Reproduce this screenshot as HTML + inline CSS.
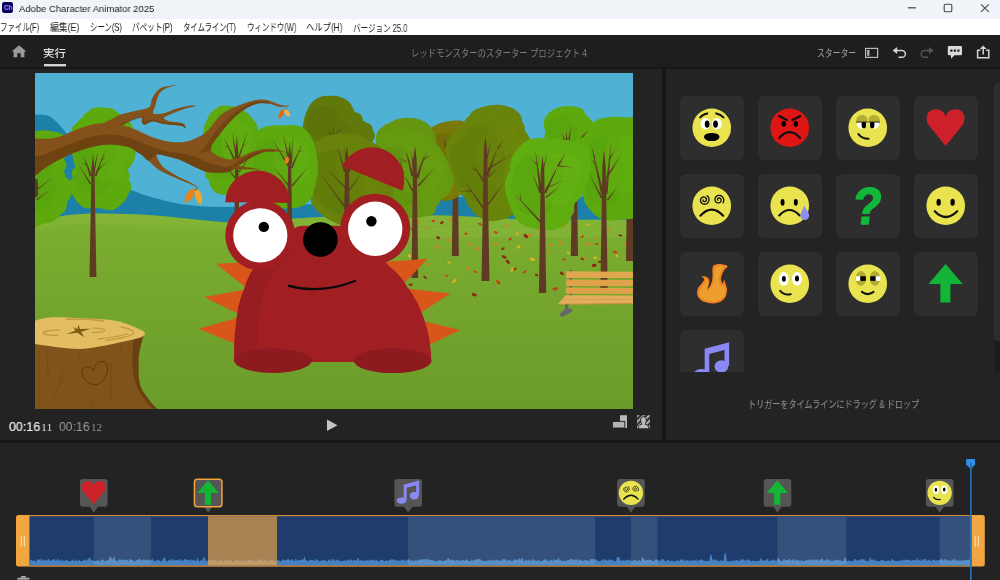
<!DOCTYPE html>
<html lang="ja">
<head>
<meta charset="utf-8">
<title>Adobe Character Animator 2025</title>
<style>
*{box-sizing:border-box;margin:0;padding:0}
html,body{width:1000px;height:580px;overflow:hidden;background:#232323}
body{position:relative;font-family:"Liberation Sans","Noto Sans CJK JP",sans-serif;color:#ccc}
.abs{position:absolute}
.t{position:absolute;white-space:nowrap;transform-origin:0 50%;line-height:1;will-change:transform}
#titlebar{left:0;top:0;width:1000px;height:19px;background:#f0f3f8}
#menubar{left:0;top:19px;width:1000px;height:16px;background:#fff}
#header{left:0;top:35px;width:1000px;height:32px;background:#1e1e1e}
#hdiv1{left:0;top:67px;width:1000px;height:2px;background:#171717}
#scenepanel{left:0;top:69px;width:662px;height:371px;background:#232323}
#vdiv{left:662px;top:69px;width:4px;height:371px;background:#171717}
#rightpanel{left:666px;top:69px;width:334px;height:371px;background:#232323;overflow:hidden}
#hdiv2{left:0;top:440px;width:1000px;height:3px;background:#171717}
#timeline{left:0;top:443px;width:1000px;height:137px;background:#232323;overflow:hidden}
.card{position:absolute;width:64px;height:64px;border-radius:6px;background:#2e2e2e}
.card svg{position:absolute;left:0;top:0}
</style>
</head>
<body>
<svg width="0" height="0" style="position:absolute">
<defs>
<!-- all symbols are drawn in a 64x64 box, centre 32,32 -->
<symbol id="e-fear" viewBox="0 0 64 64"><circle cx="31.900" cy="31.900" r="19.400" fill="#e8e34f"/>
<path d="M20.300 21.500 Q23 18.200 27.400 17.500M36.400 17.500 Q40.800 18.200 43.700 21.500" fill="none" stroke="#111" stroke-width="2.100" stroke-linecap="round"/>
<ellipse cx="25.700" cy="27.900" rx="5" ry="5.800" fill="#fff"/><ellipse cx="37" cy="27.900" rx="5" ry="5.800" fill="#fff"/>
<ellipse cx="27.300" cy="28.300" rx="2.400" ry="3.600" fill="#000"/><ellipse cx="35.700" cy="28.300" rx="2.400" ry="3.600" fill="#000"/>
<ellipse cx="31.900" cy="41.200" rx="7.800" ry="4.100" fill="#000"/></symbol>
<symbol id="e-angry" viewBox="0 0 64 64"><circle cx="31.900" cy="31.900" r="19.400" fill="#de1515"/>
<path d="M21.200 20.200 L29 24.200M42.400 20.200 L34.700 24.200" fill="none" stroke="#111" stroke-width="2.300" stroke-linecap="round"/>
<ellipse cx="25.900" cy="28" rx="2.300" ry="3" fill="#000"/><ellipse cx="38" cy="28" rx="2.300" ry="3" fill="#000"/>
<path d="M21.400 42.200 Q31.800 30.500 42.300 42.200" fill="none" stroke="#111" stroke-width="2.300" stroke-linecap="round"/></symbol>
<symbol id="e-smirk" viewBox="0 0 64 64"><circle cx="31.900" cy="31.900" r="19.400" fill="#e8e34f"/>
<ellipse cx="26.100" cy="28.300" rx="4.900" ry="4.900" fill="#fff"/><ellipse cx="38.400" cy="28.300" rx="4.900" ry="4.900" fill="#fff"/>
<ellipse cx="28" cy="28.800" rx="2.300" ry="3.700" fill="#000"/><ellipse cx="36.400" cy="28.800" rx="2.300" ry="3.700" fill="#000"/>
<path d="M20.400 26.200 L31.800 26.200 L31.800 24 A5.700 4.800 0 0 0 20.400 24Z" fill="#b3ad32"/><path d="M32.700 26.200 L44.100 26.200 L44.100 24 A5.700 4.800 0 0 0 32.700 24Z" fill="#b3ad32"/>
<path d="M20.400 26.200 L31.800 26.200M32.700 26.200 L44.100 26.200" stroke="#111" stroke-width=".9" fill="none"/>
<path d="M22.500 38.200 Q26.300 43 32.800 42.900" fill="none" stroke="#111" stroke-width="2" stroke-linecap="round"/></symbol>
<symbol id="e-heart" viewBox="0 0 64 64"><path d="M31.800 50.200 L15 29.500 C11.200 24.500 11.800 13.200 21.800 13.200 C27 13.200 30.600 16.300 31.800 20.400 C33 16.300 36.600 13.200 41.800 13.200 C51.800 13.200 52.400 24.500 48.600 29.500Z" fill="#cd2129"/></symbol>
<symbol id="e-dizzy" viewBox="0 0 64 64"><circle cx="31.900" cy="31.900" r="19.400" fill="#e8e34f"/>
<g fill="none" stroke="#111" stroke-width="1.350" stroke-linecap="round">
<path d="M23.20 26.10L23.14 26.28L23.12 26.49L23.14 26.70L23.21 26.92L23.32 27.13L23.47 27.33L23.67 27.50L23.91 27.65L24.17 27.74L24.47 27.80L24.78 27.79L25.10 27.73L25.41 27.61L25.70 27.42L25.97 27.18L26.20 26.89L26.37 26.55L26.49 26.17L26.54 25.77L26.51 25.35L26.41 24.93L26.24 24.52L25.98 24.14L25.66 23.80L25.27 23.52L24.82 23.31L24.34 23.17L23.82 23.12L23.29 23.16L22.77 23.29L22.27 23.52L21.80 23.85L21.39 24.25L21.05 24.74L20.79 25.28L20.63 25.88L20.57 26.50L20.62 27.14L20.79 27.77L21.07 28.37L21.46 28.93L21.95 29.42L22.52 29.82L23.17 30.12L23.87 30.31L24.60 30.38L25.35 30.31L26.09 30.12L26.79 29.79L27.44 29.34L28.01 28.78L28.48 28.11L28.83 27.37L29.05 26.56L29.13 25.71L29.06 24.85L28.83 24.01L28.46 23.20L27.95 22.46L27.32 21.81"/>
<path d="M37.95 26.21L37.84 26.05L37.76 25.86L37.71 25.65L37.70 25.43L37.74 25.19L37.83 24.95L37.96 24.73L38.14 24.52L38.37 24.34L38.63 24.20L38.93 24.11L39.25 24.07L39.58 24.09L39.92 24.18L40.25 24.32L40.55 24.53L40.83 24.80L41.05 25.12L41.23 25.49L41.33 25.90L41.37 26.33L41.32 26.77L41.20 27.21L41.00 27.63L40.71 28.02L40.36 28.36L39.94 28.65L39.46 28.85L38.95 28.98L38.41 29.01L37.86 28.95L37.31 28.79L36.80 28.53L36.32 28.17L35.91 27.73L35.57 27.22L35.32 26.64L35.18 26.02L35.14 25.37L35.22 24.71L35.42 24.06L35.73 23.44L36.15 22.88L36.67 22.39L37.28 22.00L37.96 21.71L38.69 21.54L39.46 21.50L40.23 21.59L40.98 21.82L41.69 22.18L42.35 22.66L42.91 23.27L43.37 23.97L43.71 24.75L43.90 25.59L43.95 26.46L43.85 27.34L43.60 28.20L43.19 29.02"/></g>
<path d="M20.500 41.900 Q31.800 29.600 43.400 41.900" fill="none" stroke="#111" stroke-width="2.200" stroke-linecap="round"/></symbol>
<symbol id="e-sad" viewBox="0 0 64 64"><circle cx="31.900" cy="31.900" r="19.400" fill="#e8e34f"/>
<ellipse cx="24.700" cy="28.400" rx="2" ry="3.400" fill="#000"/><ellipse cx="38" cy="28.400" rx="2" ry="3.400" fill="#000"/>
<path d="M21.400 41.600 Q31.600 30.800 41.800 41.600" fill="none" stroke="#111" stroke-width="2.200" stroke-linecap="round"/>
<path d="M46.400 31.500 C48 35.500 51.400 38.500 51.400 41.800 A4.400 4.400 0 0 1 42.600 41.800 C42.600 38.500 45.500 35.500 46.400 31.500Z" fill="#8d8df2"/></symbol>
<symbol id="e-q" viewBox="0 0 64 64"><text x="32" y="50.700" text-anchor="middle" font-family="'Liberation Sans',sans-serif" font-weight="bold" font-size="52" fill="#12b83a" stroke="#12b83a" stroke-width="1.600" stroke-linejoin="round" transform="translate(32 32) skewX(-6) scale(.92 1) translate(-32 -32)">?</text></symbol>
<symbol id="e-smile" viewBox="0 0 64 64"><circle cx="31.900" cy="31.900" r="19.400" fill="#e8e34f"/>
<ellipse cx="24.800" cy="28.400" rx="2.200" ry="3.600" fill="#000"/><ellipse cx="38.800" cy="28.400" rx="2.200" ry="3.600" fill="#000"/>
<path d="M20.900 37.400 Q31.800 49 43.400 37.400" fill="none" stroke="#111" stroke-width="2.300" stroke-linecap="round"/></symbol>
<symbol id="e-fire" viewBox="0 0 64 64">
<path d="M33.5 13.9C34.2 13.1 36.1 12.4 37.4 12.2C38.7 12.1 41.4 12.3 42.9 12.6C44.4 12.8 47.6 13.5 47.9 14.2C48.1 15.0 45.4 16.7 44.5 18.0C43.7 19.2 42.5 21.9 42.0 23.3C41.5 24.7 41.1 26.7 41.2 27.9C41.4 29.1 42.5 31.7 43.0 31.8C43.4 31.8 44.0 27.9 44.4 28.1C44.9 28.3 45.8 31.7 46.2 33.2C46.6 34.7 47.4 37.0 47.3 38.7C47.2 40.4 46.5 43.8 45.6 45.3C44.8 46.9 42.9 48.9 41.2 49.8C39.5 50.7 35.8 51.7 33.5 51.7C31.2 51.8 26.7 51.0 24.7 50.3C22.7 49.6 20.2 47.6 19.2 46.4C18.1 45.3 17.3 43.4 17.2 42.0C17.0 40.6 17.5 37.9 18.1 36.5C18.6 35.1 20.5 33.3 21.4 32.1C22.2 30.9 24.0 29.1 24.2 28.2C24.5 27.3 23.6 26.3 23.2 25.7C22.8 25.1 21.0 24.3 21.4 24.2C21.7 24.0 24.5 24.3 25.6 24.6C26.6 24.9 28.1 25.8 28.7 26.6C29.2 27.3 29.6 28.9 29.6 29.9C29.6 30.9 28.9 32.7 28.7 33.8C28.4 34.8 27.3 37.4 27.5 37.4C27.8 37.4 30.0 34.8 30.6 33.4C31.3 32.1 32.1 29.3 32.4 27.7C32.7 26.1 32.7 23.6 32.7 22.2C32.7 20.8 32.4 18.9 32.5 17.8C32.6 16.6 32.8 14.7 33.5 13.9Z" fill="#f4811f"/>
<path d="M35.3 15.8C35.9 14.7 37.8 14.3 39.0 14.2C40.2 14.1 43.4 14.1 43.7 14.9C43.9 15.7 41.6 18.6 41.0 20.0C40.4 21.3 39.7 23.3 39.5 24.6C39.2 25.9 38.8 27.8 39.0 29.0C39.2 30.2 40.2 32.4 40.8 33.2C41.4 34.0 42.7 34.6 43.2 34.5C43.7 34.5 43.9 32.2 44.2 32.7C44.5 33.1 45.2 36.0 45.2 37.6C45.2 39.2 45.2 42.6 44.5 44.0C43.9 45.5 41.9 47.2 40.3 48.0C38.8 48.8 35.5 49.7 33.5 49.8C31.5 49.8 27.5 49.1 25.8 48.4C24.0 47.8 21.8 46.0 20.9 45.1C20.0 44.2 19.5 42.9 19.4 41.8C19.3 40.7 19.7 38.6 20.3 37.4C20.8 36.2 22.4 34.5 23.1 33.4C23.9 32.3 25.5 30.6 25.8 29.7C26.1 28.8 25.1 27.2 25.3 27.0C25.6 26.8 27.2 27.6 27.5 28.3C27.9 29.1 28.1 30.6 28.0 32.1C27.9 33.6 26.6 38.0 26.7 38.9C26.8 39.9 27.9 39.4 28.7 38.7C29.4 38.0 31.4 35.6 32.2 34.1C33.0 32.6 33.8 29.6 34.2 27.9C34.5 26.2 34.5 23.4 34.6 21.7C34.8 20.0 34.7 16.8 35.3 15.8Z" fill="#ec9e2e"/></symbol>
<symbol id="e-lookup" viewBox="0 0 64 64"><circle cx="31.900" cy="31.900" r="19.400" fill="#e8e34f"/>
<ellipse cx="25.900" cy="27" rx="5" ry="6.900" fill="#fff"/><ellipse cx="39.100" cy="27" rx="5" ry="6.900" fill="#fff"/>
<ellipse cx="26" cy="27" rx="2" ry="3" fill="#000"/><ellipse cx="39.200" cy="26.600" rx="2" ry="3" fill="#000"/>
<path d="M22.300 39 Q26.500 43.800 32.900 42.400" fill="none" stroke="#111" stroke-width="2" stroke-linecap="round"/></symbol>
<symbol id="e-sleepy" viewBox="0 0 64 64"><circle cx="31.900" cy="31.900" r="19.400" fill="#e8e34f"/>
<ellipse cx="25" cy="26.600" rx="5.200" ry="7.400" fill="#b0aa30"/><ellipse cx="39.100" cy="26.600" rx="5.200" ry="7.400" fill="#b0aa30"/>
<rect x="20" y="24.400" width="4.600" height="4.600" fill="#fff"/><rect x="24.400" y="24.400" width="5.600" height="4.600" fill="#000"/>
<rect x="34.500" y="24.400" width="5.600" height="4.600" fill="#000"/><rect x="39.900" y="24.400" width="4.600" height="4.600" fill="#fff"/>
<path d="M26 40.100 Q31.800 44.600 37.700 40.100" fill="none" stroke="#111" stroke-width="2" stroke-linecap="round"/></symbol>
<symbol id="e-up" viewBox="0 0 64 64"><path d="M31.700 12 L48.900 32.200 L36.600 32.200 L36.600 50.800 L26.500 50.800 L26.500 32.200 L14.600 32.200Z" fill="#12b535"/></symbol>
<symbol id="e-music" viewBox="0 0 64 64"><path d="M24.800 18.900 L49.400 12.200 L49.400 36 L44.700 36 L44.700 20 L29.400 24 L29.400 43 L24.800 43Z" fill="#8a88f5"/>
<ellipse cx="41.600" cy="36.600" rx="6.900" ry="6.100" fill="#8a88f5"/><ellipse cx="21.500" cy="44.200" rx="7.500" ry="5" fill="#8a88f5"/></symbol>
</defs>
</svg>

<!-- ===== window title bar ===== -->
<div id="titlebar" class="abs">
  <div class="abs" style="left:2px;top:2.200px;width:11px;height:11px;border-radius:2.200px;background:#09005e"></div>
  <span class="t" id="chlogo" style="left:3.500px;top:4.300px;font-size:7.200px;font-weight:bold;color:#a09eff;transform:scaleX(.86);transform-origin:0 0">Ch</span>
  <svg class="abs" style="left:900px;top:0" width="100" height="19" viewBox="900 0 100 19" fill="none" stroke="#4a4a4a" stroke-width="1.100">
    <path d="M907.800 7.800h8" stroke-width="1.300"/><rect x="944.200" y="4.300" width="7.600" height="7.400" rx="1.300"/><path d="M981 4.300l7.800 7.600M988.800 4.300l-7.800 7.600"/>
  </svg>
</div>
<!-- ===== menu bar ===== -->
<div id="menubar" class="abs"></div>
<!-- ===== app header ===== -->
<div id="header" class="abs"><svg class="abs" style="left:0;top:0" width="1000" height="32" viewBox="0 35 1000 32">
<!-- home -->
<path d="M19 45.200 L26.300 51.600 L24.400 51.600 L24.400 57.200 L20.700 57.200 L20.700 53.200 L17.300 53.200 L17.300 57.200 L13.600 57.200 L13.600 51.600 L11.700 51.600Z" fill="#9a9a9a"/>
<!-- tab underline -->
<rect x="44" y="64" width="22" height="2.400" fill="#d4d4d4"/>
<!-- workspace/panel icon -->
<rect x="865.600" y="48.400" width="12" height="9" fill="none" stroke="#b9b9b9" stroke-width="1.200"/>
<rect x="867.200" y="50" width="2.200" height="5.800" fill="#b9b9b9"/>
<!-- undo -->
<path d="M896.500 50.500 L902 50.500 A3.400 3.400 0 0 1 902 57.300 L898.500 57.300" fill="none" stroke="#d2d2d2" stroke-width="1.500"/>
<path d="M892.600 50.500 L897.200 47 L897.200 54Z" fill="#d2d2d2"/>
<!-- redo (disabled) -->
<path d="M929.500 50.500 L924.600 50.500 A3.400 3.400 0 0 0 924.600 57.300 L928 57.300" fill="none" stroke="#555" stroke-width="1.500"/>
<path d="M933.600 50.500 L929 47 L929 54Z" fill="#555"/>
<!-- chat -->
<path d="M949 46 L960.800 46 Q962 46 962 47.200 L962 54 Q962 55.200 960.800 55.200 L954.500 55.200 L951 58.800 L951 55.200 L949 55.200 Q947.800 55.200 947.800 54 L947.800 47.200 Q947.800 46 949 46Z" fill="#dadada"/>
<g fill="#1e1e1e"><rect x="950.300" y="49.500" width="2.200" height="2.200"/><rect x="953.800" y="49.500" width="2.200" height="2.200"/><rect x="957.300" y="49.500" width="2.200" height="2.200"/></g>
<!-- share -->
<path d="M980.300 50.300 L977.600 50.300 L977.600 57.700 L988.800 57.700 L988.800 50.300 L986.100 50.300" fill="none" stroke="#d6d6d6" stroke-width="1.500"/>
<path d="M983.200 54.500 L983.200 47.500" fill="none" stroke="#d6d6d6" stroke-width="1.500"/>
<path d="M979.800 49 L983.200 45.400 L986.600 49Z" fill="#d6d6d6"/>
</svg>
</div>
<div id="hdiv1" class="abs"></div>
<!-- ===== scene panel ===== -->
<div id="scenepanel" class="abs"><svg class="abs" style="left:35px;top:4px" width="598" height="336" viewBox="35 73 598 336">
<defs>
<linearGradient id="gnd" x1="0" y1="0" x2="0" y2="1"><stop offset="0" stop-color="#80b233"/><stop offset=".12" stop-color="#7aac30"/><stop offset="1" stop-color="#6b9b2a"/></linearGradient>
<clipPath id="sc"><rect x="35" y="73" width="598" height="336"/></clipPath>
</defs>
<g clip-path="url(#sc)">
<rect x="35" y="73" width="598" height="336" fill="#4fb2d5"/>
<!-- far hills -->
<path d="M35 115 Q44 113.500 50 116.500 Q58 122 66 133 L80 150 L129 189 Q140 194 151 197 Q165 201 180 204 Q200 207 223 207 Q260 207 300 205 Q380 199 440 197 L633 196 L633 230 L35 230Z" fill="#1c80a9"/>
<!-- ground -->
<path d="M35 220 L47 219 Q56 217 65 215.400 Q80 213.600 95 213.600 Q110 213.500 125 213.900 Q140 214.300 155 215.400 Q170 216.600 185 218.400 Q200 220 215 221.400 Q232 222.800 250 222 Q300 217.500 340 216 Q380 215.200 445 215.400 Q480 216.500 512 219 Q540 220 633 219.500 L633 409 L35 409Z" fill="url(#gnd)"/>
<path d="M35 220 L47 219 Q56 217 65 215.400 Q80 213.600 95 213.600 Q110 213.500 125 213.900 Q140 214.300 155 215.400 Q170 216.600 185 218.400 Q200 220 215 221.400 Q232 222.800 250 222 Q300 217.500 340 216 Q380 215.200 445 215.400 Q480 216.500 512 219 Q540 220 633 219.500 L633 229 Q500 227 395 225 Q300 228 215 229 Q150 226 95 224 Q60 224 35 228Z" fill="#8ab93c" opacity=".35"/>
<!-- fallen leaves -->
<path d="M395 229 Q500 226 633 228 L633 238 Q500 236 395 239Z" fill="#8ab83e" opacity=".45"/>
<ellipse cx="433.4" cy="221.0" rx="1.8" ry="1.1" fill="#c8401a" transform="rotate(-7 433.4 221.0)"/>
<ellipse cx="441.8" cy="222.7" rx="2.1" ry="1.2" fill="#8a2c10" transform="rotate(-34 441.8 222.7)"/>
<ellipse cx="426.2" cy="228.2" rx="1.7" ry="1.2" fill="#de7a1c" transform="rotate(-17 426.2 228.2)"/>
<ellipse cx="451.4" cy="219.8" rx="1.8" ry="1.3" fill="#de7a1c" transform="rotate(2 451.4 219.8)"/>
<ellipse cx="480.2" cy="224.1" rx="2.2" ry="1.1" fill="#c8401a" transform="rotate(18 480.2 224.1)"/>
<ellipse cx="506.6" cy="225.8" rx="1.8" ry="1.2" fill="#de7a1c" transform="rotate(38 506.6 225.8)"/>
<ellipse cx="495.8" cy="232.3" rx="2.0" ry="1.2" fill="#c8401a" transform="rotate(20 495.8 232.3)"/>
<ellipse cx="465.8" cy="233.7" rx="1.7" ry="1.2" fill="#c8401a" transform="rotate(13 465.8 233.7)"/>
<ellipse cx="517.4" cy="233.7" rx="1.9" ry="0.9" fill="#e6b022" transform="rotate(38 517.4 233.7)"/>
<ellipse cx="525.8" cy="236.1" rx="2.7" ry="1.6" fill="#8a2c10" transform="rotate(39 525.8 236.1)"/>
<ellipse cx="529.4" cy="235.4" rx="2.1" ry="1.3" fill="#de7a1c" transform="rotate(-4 529.4 235.4)"/>
<ellipse cx="564.2" cy="225.8" rx="2.2" ry="1.1" fill="#de7a1c" transform="rotate(44 564.2 225.8)"/>
<ellipse cx="582.2" cy="236.6" rx="2.2" ry="0.9" fill="#c8401a" transform="rotate(-28 582.2 236.6)"/>
<ellipse cx="596.6" cy="237.8" rx="1.8" ry="1.3" fill="#de7a1c" transform="rotate(-1 596.6 237.8)"/>
<ellipse cx="620.6" cy="235.4" rx="2.1" ry="1.0" fill="#8a2c10" transform="rotate(6 620.6 235.4)"/>
<ellipse cx="588.2" cy="224.6" rx="1.9" ry="1.0" fill="#e6b022" transform="rotate(13 588.2 224.6)"/>
<ellipse cx="438.2" cy="237.8" rx="2.1" ry="1.3" fill="#8a2c10" transform="rotate(21 438.2 237.8)"/>
<ellipse cx="448.3" cy="240.2" rx="2.3" ry="1.2" fill="#de7a1c" transform="rotate(49 448.3 240.2)"/>
<ellipse cx="469.4" cy="244.3" rx="2.1" ry="1.0" fill="#de7a1c" transform="rotate(37 469.4 244.3)"/>
<ellipse cx="477.8" cy="248.6" rx="2.3" ry="1.3" fill="#de7a1c" transform="rotate(11 477.8 248.6)"/>
<ellipse cx="495.8" cy="243.8" rx="2.1" ry="1.0" fill="#de7a1c" transform="rotate(35 495.8 243.8)"/>
<ellipse cx="503.0" cy="248.6" rx="2.0" ry="1.0" fill="#8a2c10" transform="rotate(-34 503.0 248.6)"/>
<ellipse cx="518.6" cy="246.9" rx="2.2" ry="1.3" fill="#e6b022" transform="rotate(-32 518.6 246.9)"/>
<ellipse cx="437.7" cy="247.4" rx="2.2" ry="1.1" fill="#de7a1c" transform="rotate(-26 437.7 247.4)"/>
<ellipse cx="409.4" cy="255.8" rx="1.9" ry="1.2" fill="#e6b022" transform="rotate(39 409.4 255.8)"/>
<ellipse cx="428.6" cy="264.2" rx="1.7" ry="1.1" fill="#de7a1c" transform="rotate(-36 428.6 264.2)"/>
<ellipse cx="449.0" cy="262.3" rx="2.1" ry="1.0" fill="#e6b022" transform="rotate(39 449.0 262.3)"/>
<ellipse cx="468.2" cy="268.3" rx="2.3" ry="1.1" fill="#de7a1c" transform="rotate(50 468.2 268.3)"/>
<ellipse cx="475.4" cy="271.9" rx="1.9" ry="0.9" fill="#c8401a" transform="rotate(14 475.4 271.9)"/>
<ellipse cx="446.6" cy="275.7" rx="1.7" ry="1.0" fill="#c8401a" transform="rotate(-3 446.6 275.7)"/>
<ellipse cx="454.5" cy="281.0" rx="2.8" ry="1.3" fill="#e6b022" transform="rotate(-36 454.5 281.0)"/>
<ellipse cx="425.0" cy="277.4" rx="2.2" ry="1.0" fill="#8a2c10" transform="rotate(46 425.0 277.4)"/>
<ellipse cx="410.6" cy="284.6" rx="2.2" ry="1.1" fill="#8a2c10" transform="rotate(1 410.6 284.6)"/>
<ellipse cx="474.2" cy="294.7" rx="2.7" ry="1.6" fill="#8a2c10" transform="rotate(14 474.2 294.7)"/>
<ellipse cx="498.2" cy="282.2" rx="2.7" ry="1.5" fill="#c8401a" transform="rotate(45 498.2 282.2)"/>
<ellipse cx="504.2" cy="257.0" rx="2.7" ry="1.4" fill="#8a2c10" transform="rotate(25 504.2 257.0)"/>
<ellipse cx="507.8" cy="261.8" rx="2.5" ry="1.4" fill="#8a2c10" transform="rotate(48 507.8 261.8)"/>
<ellipse cx="512.6" cy="269.7" rx="2.7" ry="1.5" fill="#e6b022" transform="rotate(-39 512.6 269.7)"/>
<ellipse cx="515.0" cy="269.0" rx="1.9" ry="1.1" fill="#8a2c10" transform="rotate(-38 515.0 269.0)"/>
<ellipse cx="524.6" cy="271.9" rx="2.1" ry="1.2" fill="#c8401a" transform="rotate(-35 524.6 271.9)"/>
<ellipse cx="532.5" cy="259.4" rx="2.8" ry="1.5" fill="#e6b022" transform="rotate(21 532.5 259.4)"/>
<ellipse cx="536.6" cy="275.0" rx="1.9" ry="1.2" fill="#8a2c10" transform="rotate(26 536.6 275.0)"/>
<ellipse cx="548.6" cy="251.0" rx="1.7" ry="0.9" fill="#de7a1c" transform="rotate(21 548.6 251.0)"/>
<ellipse cx="550.5" cy="245.0" rx="2.3" ry="1.0" fill="#de7a1c" transform="rotate(1 550.5 245.0)"/>
<ellipse cx="560.6" cy="242.6" rx="2.1" ry="1.0" fill="#de7a1c" transform="rotate(-7 560.6 242.6)"/>
<ellipse cx="564.2" cy="259.4" rx="1.9" ry="1.0" fill="#c8401a" transform="rotate(14 564.2 259.4)"/>
<ellipse cx="568.3" cy="252.9" rx="1.9" ry="1.1" fill="#e6b022" transform="rotate(30 568.3 252.9)"/>
<ellipse cx="582.2" cy="258.9" rx="1.7" ry="1.1" fill="#8a2c10" transform="rotate(26 582.2 258.9)"/>
<ellipse cx="586.3" cy="258.2" rx="1.9" ry="1.0" fill="#de7a1c" transform="rotate(32 586.3 258.2)"/>
<ellipse cx="588.2" cy="244.3" rx="2.5" ry="1.3" fill="#de7a1c" transform="rotate(-1 588.2 244.3)"/>
<ellipse cx="596.6" cy="243.8" rx="2.1" ry="0.9" fill="#c8401a" transform="rotate(-11 596.6 243.8)"/>
<ellipse cx="594.2" cy="265.4" rx="2.6" ry="1.7" fill="#8a2c10" transform="rotate(-1 594.2 265.4)"/>
<ellipse cx="600.2" cy="261.8" rx="2.2" ry="1.0" fill="#8a2c10" transform="rotate(-10 600.2 261.8)"/>
<ellipse cx="595.4" cy="257.7" rx="2.1" ry="1.3" fill="#e6b022" transform="rotate(1 595.4 257.7)"/>
<ellipse cx="615.3" cy="252.2" rx="2.5" ry="1.3" fill="#c8401a" transform="rotate(8 615.3 252.2)"/>
<ellipse cx="617.0" cy="255.8" rx="1.8" ry="1.2" fill="#e6b022" transform="rotate(35 617.0 255.8)"/>
<ellipse cx="561.8" cy="273.3" rx="2.4" ry="1.4" fill="#8a2c10" transform="rotate(33 561.8 273.3)"/>
<ellipse cx="555.3" cy="288.9" rx="2.8" ry="1.7" fill="#c8401a" transform="rotate(-9 555.3 288.9)"/>
<ellipse cx="608.6" cy="229.4" rx="1.8" ry="1.0" fill="#de7a1c" transform="rotate(31 608.6 229.4)"/>
<ellipse cx="625.4" cy="243.8" rx="1.9" ry="1.0" fill="#de7a1c" transform="rotate(-2 625.4 243.8)"/>
<ellipse cx="629.0" cy="229.4" rx="2.0" ry="1.1" fill="#c8401a" transform="rotate(43 629.0 229.4)"/>
<ellipse cx="419.0" cy="222.2" rx="1.8" ry="0.9" fill="#de7a1c" transform="rotate(45 419.0 222.2)"/>
<ellipse cx="413.0" cy="229.4" rx="2.2" ry="1.3" fill="#c8401a" transform="rotate(-1 413.0 229.4)"/>
<ellipse cx="539.0" cy="229.4" rx="2.3" ry="1.3" fill="#de7a1c" transform="rotate(-20 539.0 229.4)"/>
<ellipse cx="543.8" cy="237.8" rx="2.1" ry="1.2" fill="#c8401a" transform="rotate(20 543.8 237.8)"/>
<ellipse cx="455.0" cy="229.4" rx="2.0" ry="1.0" fill="#de7a1c" transform="rotate(-9 455.0 229.4)"/>
<ellipse cx="486.2" cy="237.8" rx="1.8" ry="0.9" fill="#e6b022" transform="rotate(13 486.2 237.8)"/>
<ellipse cx="510.2" cy="239.0" rx="1.9" ry="1.2" fill="#c8401a" transform="rotate(-36 510.2 239.0)"/>
<ellipse cx="572.6" cy="246.2" rx="2.2" ry="1.2" fill="#c8401a" transform="rotate(43 572.6 246.2)"/>
<ellipse cx="606.2" cy="248.6" rx="2.2" ry="1.3" fill="#de7a1c" transform="rotate(12 606.2 248.6)"/>
<g fill="#5e3b22"><path d="M451.800 256L458.800 256L458 185L453 185Z"/><path d="M570.800 256L578 256L577 185L572 185Z"/><path d="M626 261L633.500 261L632.500 185L627 185Z"/></g>
<path d="M447.0 121.5C451.7 120.7 457.8 119.9 462.0 121.0C466.2 122.1 469.7 124.0 472.0 128.0C474.3 132.0 476.3 138.0 476.0 145.0C475.7 152.0 472.7 161.7 470.0 170.0C467.3 178.3 465.0 190.0 460.0 195.0C455.0 200.0 445.8 202.5 440.0 200.0C434.2 197.5 428.2 188.3 425.0 180.0C421.8 171.7 421.2 157.5 421.0 150.0C420.8 142.5 421.8 139.0 424.0 135.0C426.2 131.0 430.2 128.2 434.0 126.0C437.8 123.8 442.3 122.3 447.0 121.5Z" fill="#7a7808"/><g fill="#7a7808"><circle cx="453.1" cy="128.0" r="7.2"/><circle cx="463.4" cy="129.8" r="6.8"/><circle cx="467.4" cy="140.5" r="8.1"/><circle cx="468.3" cy="151.4" r="6.6"/><circle cx="464.9" cy="160.4" r="7.8"/><circle cx="463.2" cy="170.8" r="7.3"/><circle cx="460.3" cy="183.0" r="6.5"/><circle cx="449.7" cy="190.2" r="7.7"/><circle cx="437.9" cy="189.1" r="6.5"/><circle cx="432.4" cy="178.9" r="7.5"/><circle cx="428.8" cy="168.5" r="6.6"/><circle cx="428.1" cy="156.2" r="6.6"/><circle cx="429.2" cy="145.0" r="7.5"/><circle cx="434.4" cy="136.5" r="8.5"/><circle cx="442.2" cy="129.9" r="6.7"/></g><path d="M440.3 133.9C443.2 133.3 447.1 132.8 449.6 133.5C452.2 134.2 454.4 135.5 455.8 138.1C457.3 140.8 458.5 144.7 458.3 149.4C458.1 154.0 456.2 160.4 454.6 165.9C452.9 171.4 451.5 179.1 448.4 182.4C445.3 185.7 439.6 187.3 436.0 185.7C432.4 184.0 428.7 178.0 426.7 172.5C424.7 167.0 424.3 157.6 424.2 152.7C424.1 147.7 424.7 145.4 426.1 142.8C427.4 140.1 429.9 138.3 432.3 136.8C434.7 135.3 437.4 134.4 440.3 133.9Z" fill="#5e5e06" opacity="0.3"/>
<g fill="#5e3b22"><path d="M446.8 149.9L444.0 136.0L445.2 150.1Z"/><path d="M446.6 146.2L450.0 137.0L445.4 145.8Z"/></g>
<path d="M326.2 96.0C330.2 95.7 336.0 95.8 340.0 97.0C344.0 98.2 347.8 100.5 350.3 103.3C352.8 106.1 352.0 110.3 355.2 114.1C358.4 117.9 366.4 122.2 369.6 126.2C372.8 130.2 376.1 134.0 374.5 138.0C372.9 142.0 367.4 148.0 360.0 150.0C352.6 152.0 339.2 151.7 330.0 150.0C320.8 148.3 309.4 144.4 305.0 140.0C300.6 135.6 302.8 129.1 303.3 123.8C303.8 118.5 306.0 112.2 308.1 108.1C310.2 104.0 313.0 101.0 316.0 99.0C319.0 97.0 322.2 96.3 326.2 96.0Z" fill="#61790a"/><g fill="#61790a"><circle cx="334.0" cy="103.0" r="7.0"/><circle cx="342.2" cy="107.2" r="8.0"/><circle cx="345.9" cy="113.6" r="8.9"/><circle cx="354.9" cy="120.2" r="7.9"/><circle cx="365.4" cy="129.9" r="7.4"/><circle cx="360.5" cy="138.8" r="8.9"/><circle cx="349.6" cy="144.6" r="6.5"/><circle cx="337.2" cy="141.8" r="8.6"/><circle cx="326.6" cy="141.4" r="7.1"/><circle cx="316.1" cy="138.3" r="6.8"/><circle cx="310.1" cy="129.8" r="6.7"/><circle cx="312.5" cy="116.9" r="7.2"/><circle cx="318.7" cy="108.2" r="8.5"/><circle cx="324.7" cy="102.9" r="6.8"/></g><path d="M320.9 106.3C323.3 106.1 326.9 106.2 329.4 107.0C331.9 107.8 334.2 109.3 335.8 111.1C337.4 113.0 336.9 115.7 338.8 118.3C340.8 120.8 345.8 123.6 347.8 126.2C349.8 128.9 351.8 131.4 350.8 134.0C349.8 136.7 346.4 140.6 341.8 142.0C337.2 143.3 328.9 143.1 323.2 142.0C317.5 140.9 310.5 138.2 307.7 135.4C305.0 132.5 306.3 128.2 306.7 124.7C307.0 121.2 308.3 117.0 309.6 114.3C311.0 111.6 312.7 109.6 314.5 108.3C316.4 107.0 318.4 106.5 320.9 106.3Z" fill="#536b09" opacity="0.3"/>
<g fill="#5e3b22"><path d="M334.0 136.5L326.2 128.6L332.8 137.5Z"/><path d="M334.1 137.0L333.4 125.5L332.7 137.0Z"/><path d="M334.5 137.4L341.9 127.4L333.5 136.6Z"/></g>
<path d="M556.6 108.0C560.5 106.4 565.2 106.1 569.5 106.3C573.8 106.5 579.8 107.4 582.5 109.2C585.2 111.0 584.3 114.9 586.0 117.0C587.7 119.1 591.8 118.2 592.8 122.0C593.8 125.8 594.1 134.5 592.0 140.0C589.9 145.5 586.2 152.5 580.0 155.0C573.8 157.5 560.8 156.7 555.0 155.0C549.2 153.3 546.5 148.3 545.0 145.0C543.5 141.7 546.5 138.4 546.3 135.0C546.1 131.6 543.7 127.9 543.7 124.7C543.7 121.5 544.1 118.5 546.3 115.7C548.4 112.9 552.7 109.6 556.6 108.0Z" fill="#5ea90d"/><g fill="#5ea90d"><circle cx="564.2" cy="114.6" r="7.9"/><circle cx="572.7" cy="114.6" r="8.1"/><circle cx="578.8" cy="117.5" r="7.4"/><circle cx="582.4" cy="122.0" r="7.8"/><circle cx="586.2" cy="130.2" r="6.5"/><circle cx="581.6" cy="143.1" r="6.5"/><circle cx="572.0" cy="148.7" r="6.9"/><circle cx="562.7" cy="147.4" r="8.2"/><circle cx="554.2" cy="144.3" r="7.5"/><circle cx="551.5" cy="136.5" r="7.2"/><circle cx="552.5" cy="129.1" r="7.9"/><circle cx="551.8" cy="122.6" r="7.6"/><circle cx="556.1" cy="116.8" r="7.2"/></g><path d="M553.9 116.7C556.3 115.7 559.2 115.5 561.9 115.6C564.6 115.7 568.3 116.3 570.0 117.5C571.7 118.7 571.1 121.2 572.1 122.7C573.2 124.1 575.7 123.4 576.4 126.0C577.0 128.5 577.2 134.2 575.9 137.8C574.5 141.5 572.2 146.1 568.4 147.7C564.6 149.4 556.5 148.8 552.9 147.7C549.3 146.6 547.6 143.3 546.7 141.1C545.8 138.9 547.7 136.8 547.5 134.5C547.4 132.3 545.9 129.9 545.9 127.7C545.9 125.6 546.2 123.6 547.5 121.8C548.9 120.0 551.5 117.7 553.9 116.7Z" fill="#4e9a0c" opacity="0.3"/>
<g fill="#5e3b22"><path d="M567.8 139.9L566.0 130.0L566.2 140.1Z"/><path d="M569.8 140.1L571.0 127.0L568.2 139.9Z"/><path d="M565.6 139.7L561.0 132.0L564.4 140.3Z"/><path d="M583.4 137.3L589.0 129.0L582.6 136.7Z"/><path d="M581.4 138.3L586.0 131.0L580.6 137.7Z"/></g>
<path d="M410.4 117.9C414.4 118.2 418.6 119.0 422.0 120.5C425.4 122.0 428.2 123.7 430.5 126.9C432.8 130.2 436.1 134.5 436.0 140.0C435.9 145.5 436.0 155.8 430.0 160.0C424.0 164.2 408.3 165.8 400.0 165.0C391.7 164.2 383.9 160.2 380.0 155.0C376.1 149.8 375.4 138.8 376.7 133.6C378.0 128.4 384.4 126.4 388.0 124.0C391.6 121.6 394.3 120.0 398.0 119.0C401.7 118.0 406.4 117.7 410.4 117.9Z" fill="#649610"/><g fill="#649610"><circle cx="413.2" cy="124.9" r="6.8"/><circle cx="421.0" cy="127.1" r="6.6"/><circle cx="427.9" cy="134.0" r="5.6"/><circle cx="427.7" cy="147.2" r="6.3"/><circle cx="419.4" cy="156.2" r="6.2"/><circle cx="407.4" cy="157.2" r="6.9"/><circle cx="393.7" cy="154.9" r="6.6"/><circle cx="383.6" cy="142.8" r="5.7"/><circle cx="388.9" cy="130.7" r="7.2"/><circle cx="396.5" cy="125.2" r="5.3"/><circle cx="405.1" cy="124.1" r="6.0"/></g>
<path d="M385.0 132.0C388.8 129.8 394.2 129.2 400.0 129.0C405.8 128.8 413.8 128.4 420.0 131.0C426.2 133.6 432.6 139.5 437.3 144.8C442.1 150.1 445.7 157.2 448.5 162.8C451.3 168.4 454.0 173.3 454.0 178.5C454.0 183.7 451.3 190.5 448.5 194.2C445.7 197.9 439.6 197.9 437.3 200.9C435.1 203.9 436.9 209.4 435.0 212.0C433.1 214.6 431.0 215.6 426.0 216.6C421.0 217.6 411.8 218.8 405.0 218.0C398.2 217.2 389.8 216.7 385.0 212.0C380.2 207.3 377.7 198.7 376.0 190.0C374.3 181.3 374.8 168.0 375.0 160.0C375.2 152.0 375.3 146.7 377.0 142.0C378.7 137.3 381.2 134.2 385.0 132.0Z" fill="#669a10"/><g fill="#669a10"><circle cx="396.0" cy="137.7" r="8.4"/><circle cx="410.6" cy="136.4" r="6.8"/><circle cx="426.0" cy="144.7" r="7.7"/><circle cx="437.9" cy="157.4" r="6.5"/><circle cx="443.6" cy="171.5" r="8.1"/><circle cx="443.6" cy="184.0" r="8.4"/><circle cx="437.0" cy="192.9" r="7.9"/><circle cx="431.4" cy="199.7" r="8.7"/><circle cx="427.9" cy="208.0" r="7.2"/><circle cx="415.2" cy="209.5" r="8.2"/><circle cx="398.2" cy="208.2" r="7.9"/><circle cx="388.0" cy="201.2" r="7.9"/><circle cx="384.5" cy="191.9" r="7.6"/><circle cx="383.7" cy="180.9" r="8.6"/><circle cx="383.5" cy="169.1" r="8.9"/><circle cx="382.1" cy="154.9" r="7.6"/><circle cx="386.1" cy="142.8" r="8.1"/></g><path d="M385.7 148.6C388.1 147.2 391.4 146.7 395.0 146.6C398.7 146.5 403.6 146.2 407.4 147.9C411.3 149.7 415.2 153.5 418.2 157.0C421.1 160.5 423.4 165.2 425.1 168.9C426.8 172.6 428.5 175.8 428.5 179.3C428.5 182.7 426.8 187.2 425.1 189.6C423.4 192.1 419.6 192.1 418.2 194.1C416.8 196.0 417.9 199.7 416.7 201.4C415.6 203.1 414.3 203.8 411.2 204.4C408.1 205.1 402.4 205.9 398.1 205.4C393.9 204.8 388.7 204.5 385.7 201.4C382.7 198.3 381.2 192.6 380.2 186.9C379.1 181.2 379.4 172.4 379.5 167.1C379.6 161.8 379.7 158.3 380.8 155.2C381.8 152.1 383.4 150.0 385.7 148.6Z" fill="#588b0d" opacity="0.3"/><path d="M407.5 147.3C409.6 146.1 412.6 145.8 415.8 145.7C419.0 145.6 423.3 145.3 426.8 146.8C430.2 148.2 433.7 151.4 436.3 154.4C438.9 157.3 440.9 161.2 442.4 164.3C444.0 167.3 445.5 170.0 445.5 172.9C445.5 175.8 444.0 179.5 442.4 181.5C440.9 183.6 437.5 183.6 436.3 185.2C435.0 186.8 436.1 189.9 435.0 191.3C434.0 192.8 432.8 193.3 430.1 193.8C427.3 194.4 422.3 195.0 418.5 194.6C414.8 194.2 410.2 193.9 407.5 191.3C404.9 188.7 403.5 184.0 402.6 179.2C401.7 174.4 401.9 167.1 402.0 162.7C402.1 158.3 402.2 155.4 403.1 152.8C404.0 150.2 405.4 148.5 407.5 147.3Z" fill="#6fa414" opacity="0.3"/>
<g fill="#5e3b22"><path d="M411.5 278L418.2 278L416.7 160L414.9 146L413.1 160Z"/><path d="M413.9 175.7L405.9 151.6L411.3 176.3Z"/><path d="M414.8 170.9L411.5 152.0L412.6 171.1Z"/><path d="M418.4 178.4L424.9 152.7L415.8 177.6Z"/><path d="M418.9 186.6L435.0 167.3L417.5 185.4Z"/><path d="M413.4 190.6L403.6 174.0L411.8 191.4Z"/><path d="M404.2 173.9L399.1 156.0L403.0 174.1Z"/><path d="M406.7 161.6L399.0 158.0L406.3 162.4Z"/><path d="M423.3 160.4L432.0 154.0L422.7 159.6Z"/><path d="M410.0 161.9L406.0 150.0L409.0 162.1Z"/><path d="M420.5 168.2L428.0 150.0L419.5 167.8Z"/><path d="M415.2 165.1L416.0 148.0L413.8 164.9Z"/></g>
<path d="M595.4 120.9C598.9 118.3 605.8 117.6 611.0 117.0C616.2 116.4 621.7 116.7 626.5 117.5C631.3 118.3 636.9 113.2 640.0 122.0C643.1 130.8 645.0 154.8 645.0 170.0C645.0 185.2 644.0 204.8 640.0 213.0C636.0 221.2 627.2 218.3 621.0 219.4C614.8 220.5 608.2 221.0 603.0 219.4C597.8 217.8 593.0 213.2 590.0 210.0C587.0 206.8 586.2 203.0 585.0 200.0C583.8 197.0 582.0 195.9 582.5 192.0C583.0 188.1 586.8 183.5 587.7 176.5C588.6 169.5 587.6 157.3 588.0 150.0C588.4 142.7 588.8 137.3 590.0 132.5C591.2 127.7 591.9 123.5 595.4 120.9Z" fill="#5da90e"/><g fill="#5da90e"><circle cx="603.7" cy="125.1" r="6.5"/><circle cx="617.1" cy="124.9" r="8.2"/><circle cx="629.7" cy="126.5" r="8.1"/><circle cx="635.3" cy="136.5" r="9.0"/><circle cx="635.7" cy="150.4" r="8.5"/><circle cx="637.5" cy="163.2" r="7.1"/><circle cx="637.3" cy="175.6" r="7.4"/><circle cx="636.0" cy="187.3" r="8.1"/><circle cx="636.8" cy="201.3" r="6.4"/><circle cx="627.4" cy="209.7" r="7.6"/><circle cx="611.4" cy="212.9" r="6.8"/><circle cx="598.0" cy="208.5" r="6.7"/><circle cx="590.5" cy="199.6" r="6.5"/><circle cx="589.0" cy="190.0" r="8.4"/><circle cx="590.3" cy="180.6" r="6.7"/><circle cx="594.4" cy="169.4" r="7.0"/><circle cx="593.9" cy="160.3" r="7.4"/><circle cx="593.6" cy="148.1" r="8.7"/><circle cx="594.8" cy="132.6" r="6.6"/></g><path d="M591.9 139.1C594.0 137.4 598.3 136.9 601.5 136.5C604.8 136.2 608.2 136.3 611.2 136.9C614.2 137.4 617.6 134.1 619.5 139.8C621.4 145.6 622.6 161.5 622.6 171.5C622.6 181.5 622.0 194.5 619.5 199.9C617.0 205.3 611.6 203.4 607.7 204.1C603.9 204.8 599.8 205.2 596.6 204.1C593.4 203.1 590.4 200.1 588.5 197.9C586.7 195.8 586.2 193.3 585.4 191.3C584.7 189.3 583.6 188.6 583.9 186.0C584.2 183.5 586.5 180.4 587.1 175.8C587.7 171.2 587.1 163.2 587.3 158.3C587.5 153.5 587.8 150.0 588.5 146.8C589.3 143.6 589.7 140.8 591.9 139.1Z" fill="#4e9a0c" opacity="0.3"/><path d="M608.3 138.4C610.3 136.9 614.1 136.5 616.9 136.2C619.8 135.9 622.8 136.0 625.5 136.5C628.1 136.9 631.2 134.2 632.9 139.0C634.6 143.8 635.6 157.0 635.6 165.4C635.6 173.7 635.1 184.5 632.9 189.0C630.7 193.5 625.8 191.9 622.4 192.5C619.0 193.1 615.4 193.4 612.5 192.5C609.7 191.7 607.0 189.1 605.4 187.4C603.7 185.6 603.3 183.5 602.6 181.9C601.9 180.2 601.0 179.6 601.3 177.5C601.5 175.3 603.6 172.8 604.1 168.9C604.6 165.1 604.1 158.4 604.3 154.4C604.5 150.3 604.7 147.4 605.4 144.7C606.1 142.1 606.4 139.8 608.3 138.4Z" fill="#68b414" opacity="0.35"/>
<g fill="#5e3b22"><path d="M600.4 288L607.7 288L605.7 165L604.0 151L602.4 165Z"/><path d="M603.9 193.7L590.8 143.3L601.1 194.3Z"/><path d="M607.5 194.1L611.3 142.0L604.5 193.9Z"/><path d="M607.9 177.6L620.9 155.3L606.1 176.4Z"/><path d="M602.6 197.6L589.6 174.6L601.0 198.4Z"/><path d="M596.4 164.7L590.0 158.0L595.6 165.3Z"/><path d="M609.6 160.3L616.0 148.0L608.4 159.7Z"/><path d="M595.0 157.9L593.0 149.0L594.0 158.1Z"/><path d="M608.1 200.4L618.0 186.0L606.9 199.6Z"/><path d="M604.9 170.0L604.5 150.0L603.1 170.0Z"/></g>
<path d="M497.9 104.7C502.7 105.0 509.1 106.5 513.0 108.5C516.9 110.5 520.0 113.9 521.5 117.0C523.0 120.1 520.7 123.5 522.0 127.0C523.3 130.4 527.2 132.2 529.4 137.7C531.6 143.2 534.9 151.3 535.0 160.0C535.1 168.7 533.3 181.2 530.0 190.0C526.7 198.8 520.0 208.0 515.0 213.0C510.0 218.0 504.7 218.8 500.0 220.0C495.3 221.2 491.1 221.7 486.7 220.5C482.3 219.3 476.8 215.7 473.8 212.7C470.8 209.7 471.4 206.3 468.6 202.4C465.8 198.5 459.6 193.7 457.0 189.4C454.4 185.1 454.6 181.2 453.0 176.5C451.4 171.8 448.8 165.8 447.5 161.0C446.2 156.2 444.4 152.8 445.3 148.0C446.2 143.2 449.6 136.8 453.0 132.5C456.4 128.2 462.8 125.4 466.0 122.0C469.2 118.6 469.0 114.6 472.0 112.0C475.0 109.4 479.7 107.8 484.0 106.6C488.3 105.4 493.1 104.4 497.9 104.7Z" fill="#69840a"/><g fill="#69840a"><circle cx="503.2" cy="113.4" r="7.6"/><circle cx="513.3" cy="119.0" r="7.8"/><circle cx="516.2" cy="128.1" r="8.7"/><circle cx="519.0" cy="137.0" r="8.5"/><circle cx="523.1" cy="146.0" r="8.6"/><circle cx="526.9" cy="155.0" r="7.1"/><circle cx="526.8" cy="166.1" r="7.5"/><circle cx="525.2" cy="179.0" r="7.3"/><circle cx="520.4" cy="189.9" r="8.7"/><circle cx="514.3" cy="200.1" r="8.9"/><circle cx="505.5" cy="210.4" r="6.8"/><circle cx="492.8" cy="213.8" r="6.8"/><circle cx="481.2" cy="210.0" r="7.0"/><circle cx="473.4" cy="201.3" r="7.0"/><circle cx="466.9" cy="189.9" r="7.6"/><circle cx="461.0" cy="178.5" r="7.9"/><circle cx="456.7" cy="166.9" r="7.1"/><circle cx="452.4" cy="155.0" r="6.4"/><circle cx="455.6" cy="143.2" r="7.5"/><circle cx="464.3" cy="132.3" r="7.3"/><circle cx="472.2" cy="123.7" r="7.9"/><circle cx="479.8" cy="117.5" r="8.9"/><circle cx="490.6" cy="113.4" r="8.2"/></g><path d="M482.7 124.8C485.7 125.1 489.6 126.0 492.0 127.4C494.5 128.7 496.4 130.9 497.3 133.0C498.2 135.0 496.8 137.3 497.6 139.6C498.4 141.8 500.9 143.0 502.2 146.6C503.6 150.3 505.6 155.6 505.7 161.3C505.7 167.1 504.6 175.3 502.6 181.1C500.5 187.0 496.4 193.0 493.3 196.3C490.2 199.6 486.9 200.1 484.0 200.9C481.1 201.8 478.4 202.1 475.7 201.3C473.0 200.5 469.6 198.1 467.7 196.1C465.9 194.1 466.3 191.9 464.5 189.3C462.8 186.8 458.9 183.6 457.3 180.7C455.7 177.9 455.8 175.4 454.8 172.2C453.9 169.1 452.2 165.1 451.4 162.0C450.6 158.9 449.5 156.6 450.1 153.4C450.6 150.3 452.7 146.1 454.8 143.2C457.0 140.3 460.9 138.5 462.9 136.3C464.9 134.0 464.8 131.4 466.6 129.7C468.5 128.0 471.4 126.9 474.1 126.1C476.7 125.3 479.7 124.6 482.7 124.8Z" fill="#58730a" opacity="0.3"/><path d="M504.4 124.7C507.1 124.9 510.6 125.7 512.8 126.8C514.9 127.9 516.6 129.8 517.4 131.5C518.3 133.2 517.0 135.1 517.7 137.0C518.4 138.9 520.6 139.8 521.8 142.9C523.0 145.9 524.8 150.3 524.9 155.1C524.9 159.9 523.9 166.8 522.1 171.6C520.3 176.5 516.6 181.5 513.9 184.3C511.1 187.0 508.2 187.4 505.6 188.1C503.0 188.8 500.7 189.1 498.3 188.4C495.9 187.7 492.9 185.8 491.2 184.1C489.5 182.5 489.9 180.6 488.3 178.5C486.8 176.3 483.4 173.7 482.0 171.3C480.5 168.9 480.6 166.8 479.8 164.2C478.9 161.6 477.4 158.3 476.7 155.7C476.0 153.1 475.0 151.1 475.5 148.5C476.0 145.9 477.9 142.4 479.8 140.0C481.7 137.6 485.2 136.1 486.9 134.2C488.6 132.4 488.6 130.1 490.2 128.7C491.9 127.3 494.4 126.4 496.8 125.8C499.2 125.1 501.8 124.5 504.4 124.7Z" fill="#708c0c" opacity="0.3"/>
<g fill="#5e3b22"><path d="M481.5 281L489.5 281L487.1 150L485.5 136L483.9 150Z"/><path d="M486.8 168.0L485.0 137.2L484.2 168.0Z"/><path d="M488.2 176.4L497.9 146.9L485.8 175.6Z"/><path d="M498.4 148.9L504.0 139.6L497.4 148.1Z"/><path d="M488.4 169.7L512.4 154.1L487.6 168.3Z"/><path d="M486.3 164.2L491.9 138.4L484.7 163.8Z"/><path d="M484.4 180.5L471.4 162.6L482.8 181.5Z"/><path d="M485.3 209.4L462.9 178.2L483.7 210.6Z"/><path d="M471.4 190.5L458.0 191.5L471.4 191.5Z"/><path d="M488.2 205.5L505.1 181.9L486.8 204.5Z"/><path d="M488.4 177.5L499.1 167.4L487.6 176.5Z"/><path d="M476.1 169.6L470.0 168.0L475.9 170.4Z"/></g>
<path d="M529.3 139.5C533.3 138.0 537.9 138.3 543.1 138.3C548.3 138.3 554.8 138.9 560.3 139.5C565.8 140.1 571.6 140.8 575.9 142.1C580.2 143.4 583.8 144.6 586.2 147.2C588.6 149.8 589.9 153.8 590.5 157.6C591.1 161.3 590.3 165.7 589.7 169.7C589.1 173.7 588.2 178.5 587.1 181.7C586.0 184.8 583.8 186.0 582.8 188.6C581.8 191.2 582.5 194.9 581.0 197.2C579.5 199.5 575.7 200.1 574.1 202.4C572.5 204.7 572.5 207.8 571.6 211.0C570.8 214.2 571.5 218.4 569.0 221.4C566.5 224.4 561.2 227.7 556.9 229.1C552.6 230.5 548.3 230.4 543.1 230.0C537.9 229.6 530.5 228.6 525.9 226.6C521.3 224.6 518.1 221.3 515.5 217.9C512.9 214.5 511.9 209.9 510.3 205.9C508.7 201.9 506.9 197.8 506.0 193.8C505.1 189.8 504.5 185.7 505.2 181.7C505.9 177.7 509.3 173.4 510.3 169.7C511.3 166.0 509.8 163.1 511.2 159.3C512.6 155.6 516.0 150.5 519.0 147.2C522.0 143.9 525.3 141.0 529.3 139.5Z" fill="#60ad10"/><g fill="#60ad10"><circle cx="538.4" cy="145.9" r="7.7"/><circle cx="551.4" cy="146.5" r="8.0"/><circle cx="565.0" cy="147.9" r="8.2"/><circle cx="577.1" cy="149.4" r="6.5"/><circle cx="581.8" cy="157.5" r="8.7"/><circle cx="582.9" cy="167.0" r="8.4"/><circle cx="580.3" cy="177.1" r="8.7"/><circle cx="576.9" cy="184.5" r="8.5"/><circle cx="575.2" cy="190.7" r="7.4"/><circle cx="571.6" cy="196.1" r="7.4"/><circle cx="568.5" cy="202.1" r="6.6"/><circle cx="566.3" cy="209.7" r="8.0"/><circle cx="561.1" cy="219.3" r="6.5"/><circle cx="550.0" cy="223.3" r="6.6"/><circle cx="536.6" cy="222.1" r="6.9"/><circle cx="524.5" cy="217.0" r="6.8"/><circle cx="518.3" cy="207.6" r="7.3"/><circle cx="513.9" cy="197.5" r="6.5"/><circle cx="511.6" cy="187.0" r="6.4"/><circle cx="514.1" cy="176.7" r="6.8"/><circle cx="516.5" cy="167.1" r="6.6"/><circle cx="520.4" cy="157.7" r="7.3"/><circle cx="527.5" cy="148.5" r="6.4"/></g><path d="M526.0 156.1C528.5 155.1 531.3 155.3 534.5 155.3C537.7 155.3 541.8 155.7 545.2 156.1C548.6 156.5 552.2 157.0 554.9 157.8C557.5 158.7 559.7 159.5 561.3 161.2C562.8 162.9 563.6 165.6 563.9 168.1C564.3 170.5 563.8 173.4 563.4 176.1C563.1 178.7 562.5 181.9 561.8 184.0C561.1 186.0 559.8 186.8 559.1 188.5C558.5 190.2 558.9 192.7 558.0 194.2C557.1 195.7 554.7 196.1 553.8 197.6C552.8 199.2 552.7 201.2 552.2 203.3C551.7 205.4 552.1 208.2 550.6 210.2C549.1 212.2 545.8 214.3 543.1 215.3C540.4 216.2 537.7 216.1 534.5 215.8C531.3 215.6 526.7 214.9 523.9 213.6C521.0 212.3 519.0 210.1 517.4 207.9C515.8 205.6 515.2 202.6 514.2 199.9C513.2 197.3 512.1 194.6 511.5 192.0C511.0 189.3 510.6 186.6 511.0 184.0C511.5 181.3 513.6 178.5 514.2 176.1C514.8 173.6 513.9 171.7 514.8 169.2C515.7 166.7 517.7 163.4 519.6 161.2C521.5 159.0 523.5 157.1 526.0 156.1Z" fill="#4f9c0c" opacity="0.3"/><path d="M548.7 154.8C550.9 154.0 553.5 154.2 556.3 154.2C559.2 154.2 562.8 154.5 565.8 154.8C568.8 155.2 572.0 155.6 574.4 156.3C576.7 157.0 578.7 157.7 580.0 159.1C581.4 160.5 582.1 162.7 582.4 164.8C582.7 166.9 582.3 169.2 582.0 171.5C581.6 173.7 581.2 176.3 580.5 178.1C579.9 179.8 578.7 180.4 578.2 181.9C577.6 183.3 578.0 185.3 577.2 186.6C576.4 187.8 574.2 188.2 573.4 189.4C572.5 190.7 572.5 192.4 572.0 194.2C571.5 195.9 571.9 198.2 570.6 199.9C569.2 201.6 566.3 203.3 563.9 204.1C561.5 204.9 559.2 204.9 556.3 204.6C553.5 204.4 549.4 203.9 546.9 202.8C544.3 201.6 542.6 199.9 541.1 198.0C539.7 196.1 539.2 193.6 538.3 191.4C537.4 189.2 536.4 186.9 535.9 184.7C535.5 182.5 535.1 180.3 535.5 178.1C535.9 175.8 537.7 173.5 538.3 171.5C538.8 169.4 538.0 167.8 538.8 165.7C539.6 163.7 541.4 160.9 543.1 159.1C544.7 157.3 546.5 155.7 548.7 154.8Z" fill="#6ab816" opacity="0.35"/>
<g fill="#5e3b22"><path d="M538.9 293L546.2 293L544.3 170L542.5 156L540.8 170Z"/><path d="M542.5 192.8L535.3 150.5L539.5 193.2Z"/><path d="M546.3 193.6L558.2 165.0L543.7 192.4Z"/><path d="M558.8 166.4L565.5 152.9L557.2 165.6Z"/><path d="M557.4 166.4L573.9 167.4L557.6 165.2Z"/><path d="M542.4 176.2L547.4 152.9L540.6 175.8Z"/><path d="M541.2 221.3L514.8 193.9L539.8 222.7Z"/><path d="M521.5 200.4L520.0 193.0L520.5 200.6Z"/><path d="M541.1 192.7L531.7 172.2L539.5 193.3Z"/><path d="M546.5 198.1L560.6 185.5L545.5 196.9Z"/><path d="M546.2 188.6L565.0 180.0L545.8 187.4Z"/><path d="M537.4 164.7L531.0 158.0L536.6 165.3Z"/><path d="M552.4 178.2L556.0 170.0L551.6 177.8Z"/></g>
<path d="M320.4 139.0C324.4 136.6 327.8 135.4 332.0 134.5C336.2 133.6 341.2 133.3 345.5 133.4C349.8 133.5 354.0 133.8 358.0 135.0C362.0 136.2 365.3 138.2 369.6 140.7C373.9 143.2 380.1 146.2 384.0 150.0C387.9 153.8 391.6 158.6 392.8 163.6C394.0 168.6 390.8 175.4 391.0 180.0C391.2 184.6 394.0 187.2 393.8 191.4C393.6 195.6 391.5 199.4 390.0 205.0C388.5 210.6 391.7 220.8 385.0 225.0C378.3 229.2 357.4 230.0 350.0 230.0C342.6 230.0 344.7 227.1 340.7 225.1C336.7 223.1 330.8 221.1 326.2 217.9C321.6 214.7 315.5 210.2 312.9 205.8C310.3 201.4 310.5 196.2 310.5 191.4C310.5 186.6 313.7 182.1 312.9 176.9C312.1 171.7 306.5 164.7 305.7 160.0C304.9 155.3 305.6 152.5 308.0 149.0C310.4 145.5 316.4 141.4 320.4 139.0Z" fill="#68820b"/><g fill="#68820b"><circle cx="330.3" cy="143.9" r="8.7"/><circle cx="340.5" cy="141.3" r="8.0"/><circle cx="351.3" cy="140.6" r="6.8"/><circle cx="361.4" cy="144.1" r="7.0"/><circle cx="372.2" cy="150.5" r="7.3"/><circle cx="382.2" cy="159.9" r="7.3"/><circle cx="385.6" cy="172.5" r="6.7"/><circle cx="384.4" cy="184.0" r="8.6"/><circle cx="384.3" cy="194.4" r="9.0"/><circle cx="382.4" cy="209.9" r="7.6"/><circle cx="372.8" cy="219.9" r="7.6"/><circle cx="357.6" cy="222.6" r="6.6"/><circle cx="345.8" cy="221.3" r="6.6"/><circle cx="335.7" cy="215.0" r="7.3"/><circle cx="323.8" cy="206.7" r="7.1"/><circle cx="318.7" cy="194.5" r="8.6"/><circle cx="318.0" cy="182.9" r="6.8"/><circle cx="315.3" cy="169.7" r="6.4"/><circle cx="314.3" cy="158.4" r="8.9"/><circle cx="319.6" cy="149.0" r="7.8"/></g><path d="M319.8 153.8C322.3 152.2 324.4 151.4 327.0 150.8C329.6 150.2 332.7 150.0 335.3 150.1C338.0 150.1 340.6 150.3 343.1 151.1C345.6 151.9 347.6 153.2 350.3 154.9C353.0 156.5 356.8 158.5 359.2 161.0C361.6 163.5 363.9 166.7 364.7 170.0C365.4 173.3 363.4 177.8 363.5 180.8C363.7 183.9 365.4 185.6 365.3 188.3C365.2 191.1 363.8 193.6 362.9 197.3C362.0 201.0 364.0 207.8 359.8 210.5C355.7 213.3 342.7 213.8 338.1 213.8C333.5 213.8 334.8 211.9 332.4 210.6C329.9 209.2 326.2 208.0 323.4 205.8C320.5 203.7 316.7 200.8 315.1 197.8C313.5 194.9 313.6 191.5 313.6 188.3C313.6 185.2 315.6 182.2 315.1 178.8C314.6 175.3 311.2 170.7 310.7 167.6C310.2 164.5 310.6 162.7 312.1 160.4C313.6 158.0 317.3 155.3 319.8 153.8Z" fill="#566f0a" opacity="0.3"/><path d="M343.8 151.9C346.0 150.6 347.9 149.9 350.2 149.4C352.5 148.9 355.2 148.8 357.6 148.8C360.0 148.8 362.3 149.0 364.5 149.7C366.7 150.3 368.5 151.4 370.9 152.8C373.2 154.2 376.6 155.8 378.8 157.9C380.9 160.0 383.0 162.7 383.6 165.4C384.3 168.2 382.5 171.9 382.6 174.4C382.7 177.0 384.3 178.4 384.2 180.7C384.1 183.0 382.9 185.1 382.1 188.2C381.3 191.3 383.0 196.9 379.3 199.2C375.7 201.5 364.1 201.9 360.1 201.9C356.0 201.9 357.1 200.3 355.0 199.2C352.8 198.1 349.5 197.0 347.0 195.3C344.4 193.5 341.1 191.0 339.7 188.6C338.2 186.2 338.3 183.3 338.3 180.7C338.3 178.1 340.1 175.6 339.7 172.7C339.2 169.8 336.2 166.0 335.7 163.4C335.3 160.9 335.6 159.3 337.0 157.4C338.3 155.5 341.6 153.2 343.8 151.9Z" fill="#6f8a0d" opacity="0.3"/>
<g fill="#5e3b22"><path d="M343.6 235L350.3 235L348.6 160L347.0 146L345.3 160Z"/><path d="M346.1 171.7L337.1 145.5L343.9 172.3Z"/><path d="M348.0 169.9L344.3 145.5L346.0 170.1Z"/><path d="M349.9 172.3L356.0 150.0L348.1 171.7Z"/><path d="M345.7 206.5L319.0 172.0L344.3 207.5Z"/><path d="M346.0 187.5L326.0 168.0L345.0 188.5Z"/><path d="M350.0 190.4L362.0 172.0L349.0 189.6Z"/></g>
<path d="M218.7 106.6C222.2 104.9 225.9 105.4 230.0 106.0C234.1 106.6 239.3 108.0 243.0 110.0C246.7 112.0 249.5 114.7 252.0 118.0C254.5 121.3 257.2 122.2 258.0 130.0C258.8 137.8 259.2 155.0 257.0 165.0C254.8 175.0 250.9 185.1 245.0 190.0C239.1 194.9 227.0 195.1 221.3 194.6C215.6 194.1 213.2 190.2 211.0 186.8C208.8 183.4 209.6 180.1 208.4 174.0C207.2 167.9 204.7 157.3 204.0 150.0C203.3 142.7 203.2 135.7 204.0 130.0C204.8 124.3 206.6 119.9 209.0 116.0C211.4 112.1 215.2 108.3 218.7 106.6Z" fill="#5da90e"/><g fill="#5da90e"><circle cx="224.9" cy="112.7" r="6.8"/><circle cx="234.8" cy="115.2" r="7.8"/><circle cx="244.2" cy="119.1" r="6.4"/><circle cx="249.1" cy="128.4" r="7.8"/><circle cx="249.4" cy="140.3" r="8.9"/><circle cx="249.6" cy="153.2" r="8.6"/><circle cx="248.6" cy="165.7" r="8.2"/><circle cx="244.9" cy="177.8" r="7.1"/><circle cx="237.4" cy="184.4" r="7.3"/><circle cx="227.3" cy="187.0" r="6.8"/><circle cx="218.1" cy="183.0" r="8.4"/><circle cx="213.0" cy="173.8" r="7.8"/><circle cx="212.5" cy="162.0" r="8.4"/><circle cx="211.2" cy="152.9" r="7.2"/><circle cx="210.5" cy="141.2" r="7.0"/><circle cx="212.2" cy="128.7" r="8.5"/><circle cx="217.2" cy="119.1" r="9.0"/></g><path d="M215.1 121.4C217.3 120.3 219.6 120.7 222.1 121.1C224.7 121.4 227.9 122.4 230.2 123.7C232.5 125.0 234.2 126.8 235.8 129.0C237.3 131.2 239.0 131.7 239.5 136.9C240.0 142.1 240.2 153.4 238.9 160.0C237.5 166.6 235.1 173.2 231.4 176.5C227.8 179.7 220.3 179.9 216.8 179.5C213.2 179.2 211.7 176.6 210.4 174.4C209.0 172.1 209.5 170.0 208.8 165.9C208.0 161.9 206.5 154.9 206.0 150.1C205.6 145.3 205.5 140.6 206.0 136.9C206.5 133.2 207.6 130.2 209.1 127.7C210.6 125.1 213.0 122.5 215.1 121.4Z" fill="#4e9a0c" opacity="0.3"/><path d="M229.3 119.6C231.2 118.7 233.3 119.0 235.5 119.3C237.7 119.6 240.6 120.4 242.6 121.5C244.7 122.6 246.2 124.0 247.6 125.9C249.0 127.7 250.4 128.2 250.9 132.5C251.3 136.8 251.5 146.2 250.3 151.7C249.1 157.2 247.0 162.8 243.7 165.5C240.5 168.2 233.8 168.3 230.7 168.0C227.6 167.7 226.2 165.6 225.0 163.7C223.9 161.8 224.3 160.0 223.6 156.7C223.0 153.3 221.6 147.5 221.2 143.5C220.8 139.4 220.7 135.6 221.2 132.5C221.6 129.4 222.6 126.9 223.9 124.8C225.3 122.6 227.3 120.5 229.3 119.6Z" fill="#68b414" opacity="0.35"/>
<g fill="#5e3b22"><path d="M234.2 230L239.4 230L238.1 150L236.8 136L235.5 150Z"/><path d="M236.5 161.5L223.9 137.6L234.5 162.5Z"/><path d="M237.5 157.8L232.1 131.4L235.5 158.2Z"/><path d="M238.9 160.3L247.7 131.4L237.1 159.7Z"/><path d="M235.5 177.6L221.0 160.0L234.5 178.4Z"/><path d="M239.5 172.4L250.0 156.0L238.5 171.6Z"/><path d="M229.1 146.6L224.0 146.0L228.9 147.4Z"/><path d="M243.2 146.3L249.0 142.0L242.8 145.7Z"/></g>
<path d="M260.9 128.6C263.5 126.8 264.9 126.7 268.4 126.2C271.8 125.7 276.4 125.5 281.6 125.5C286.8 125.5 295.0 124.4 299.7 126.0C304.4 127.6 307.4 131.3 310.0 135.0C312.6 138.7 313.9 142.2 315.2 148.0C316.5 153.8 318.4 162.2 318.0 170.0C317.6 177.8 314.4 189.2 312.6 194.6C310.8 200.0 310.0 200.2 307.4 202.4C304.8 204.6 302.4 206.6 297.0 207.5C291.6 208.4 282.0 209.2 275.0 208.0C268.0 206.8 259.5 205.5 255.0 200.0C250.5 194.5 248.8 183.3 248.0 175.0C247.2 166.7 249.2 156.3 250.0 150.0C250.8 143.7 251.2 140.6 253.0 137.0C254.8 133.4 258.3 130.4 260.9 128.6Z" fill="#5da90e"/><g fill="#5da90e"><circle cx="268.5" cy="134.6" r="8.6"/><circle cx="276.8" cy="133.7" r="8.5"/><circle cx="289.1" cy="133.7" r="8.5"/><circle cx="300.4" cy="137.1" r="8.3"/><circle cx="307.2" cy="145.3" r="7.0"/><circle cx="309.3" cy="159.7" r="7.7"/><circle cx="310.2" cy="173.5" r="7.3"/><circle cx="309.3" cy="184.5" r="6.5"/><circle cx="306.4" cy="193.6" r="6.4"/><circle cx="299.5" cy="198.8" r="7.1"/><circle cx="285.6" cy="201.1" r="7.1"/><circle cx="268.1" cy="196.9" r="8.2"/><circle cx="259.1" cy="187.7" r="8.9"/><circle cx="256.0" cy="177.7" r="7.5"/><circle cx="256.8" cy="167.2" r="8.8"/><circle cx="257.9" cy="157.7" r="9.0"/><circle cx="258.8" cy="147.8" r="8.9"/><circle cx="261.6" cy="138.0" r="7.3"/></g><path d="M260.4 142.0C262.0 140.9 262.9 140.8 265.0 140.5C267.2 140.1 270.0 140.0 273.2 140.0C276.4 140.0 281.5 139.3 284.4 140.3C287.4 141.4 289.2 143.8 290.8 146.3C292.4 148.7 293.2 151.0 294.0 154.8C294.9 158.7 296.0 164.2 295.8 169.4C295.5 174.5 293.5 182.0 292.4 185.6C291.3 189.2 290.8 189.3 289.2 190.8C287.6 192.2 286.1 193.5 282.8 194.1C279.4 194.7 273.5 195.3 269.1 194.4C264.8 193.6 259.5 192.8 256.7 189.2C253.9 185.5 252.9 178.2 252.4 172.7C251.9 167.2 253.1 160.3 253.6 156.2C254.1 152.0 254.3 149.9 255.5 147.6C256.6 145.2 258.8 143.2 260.4 142.0Z" fill="#4e9a0c" opacity="0.3"/><path d="M279.4 139.7C280.9 138.8 281.7 138.7 283.6 138.4C285.5 138.1 288.0 138.1 290.8 138.0C293.7 138.0 298.2 137.4 300.8 138.3C303.4 139.2 305.0 141.2 306.5 143.3C307.9 145.3 308.6 147.2 309.3 150.4C310.0 153.6 311.1 158.2 310.9 162.5C310.6 166.8 308.9 173.1 307.9 176.0C306.9 179.0 306.5 179.2 305.0 180.3C303.6 181.5 302.3 182.6 299.3 183.1C296.3 183.7 291.1 184.1 287.2 183.4C283.4 182.7 278.7 182.0 276.2 179.0C273.7 176.0 272.8 169.8 272.4 165.3C271.9 160.7 273.0 155.0 273.5 151.5C273.9 148.0 274.1 146.3 275.1 144.4C276.1 142.4 278.0 140.7 279.4 139.7Z" fill="#68b414" opacity="0.35"/>
<g fill="#5e3b22"><path d="M287.0 230L292.2 230L290.9 155L289.6 141L288.3 155Z"/><path d="M289.4 165.4L272.5 139.7L287.6 166.6Z"/><path d="M290.5 161.8L282.9 133.5L288.5 162.2Z"/><path d="M291.9 164.1L293.2 136.0L290.1 163.9Z"/><path d="M292.4 168.4L303.0 142.0L290.6 167.6Z"/><path d="M288.5 184.6L272.0 165.0L287.5 185.4Z"/><path d="M292.6 186.5L309.0 166.0L291.4 185.5Z"/><path d="M279.0 149.6L273.0 150.0L279.0 150.4Z"/><path d="M298.1 152.4L304.0 150.0L297.9 151.6Z"/></g>
<path d="M92.0 108.5C94.8 107.3 98.6 107.4 102.3 107.6C106.0 107.8 111.1 108.1 114.0 109.5C116.9 110.9 116.9 113.8 119.7 116.0C122.5 118.2 128.0 119.0 130.7 123.0C133.4 127.0 135.3 134.1 136.0 140.0C136.7 145.9 135.9 153.6 134.6 158.4C133.3 163.2 129.8 165.7 128.0 168.7C126.2 171.7 123.8 173.5 124.0 176.5C124.2 179.5 129.1 182.9 129.4 186.8C129.7 190.7 128.4 195.9 125.6 199.8C122.8 203.7 116.9 208.6 112.6 210.0C108.3 211.4 104.4 208.4 99.7 208.0C95.0 207.6 88.5 209.3 84.2 207.5C79.9 205.7 76.1 200.9 73.8 197.0C71.5 193.1 70.1 188.3 70.5 184.0C70.9 179.7 75.8 177.0 76.0 171.3C76.2 165.6 72.2 156.9 71.5 150.0C70.8 143.1 70.5 134.7 71.5 130.0C72.5 125.3 75.4 124.5 77.7 122.0C80.0 119.5 83.1 117.2 85.5 115.0C87.9 112.8 89.2 109.7 92.0 108.5Z" fill="#5da90e"/><g fill="#5da90e"><circle cx="97.9" cy="114.6" r="7.0"/><circle cx="107.4" cy="115.1" r="7.0"/><circle cx="114.9" cy="119.0" r="6.9"/><circle cx="121.8" cy="125.1" r="6.9"/><circle cx="127.5" cy="136.3" r="8.0"/><circle cx="127.2" cy="151.1" r="8.7"/><circle cx="123.4" cy="161.6" r="8.6"/><circle cx="120.0" cy="168.5" r="7.6"/><circle cx="121.4" cy="176.1" r="8.1"/><circle cx="123.0" cy="186.6" r="8.5"/><circle cx="117.1" cy="199.0" r="6.6"/><circle cx="105.7" cy="201.3" r="8.1"/><circle cx="93.7" cy="199.6" r="8.8"/><circle cx="82.7" cy="195.2" r="8.4"/><circle cx="77.5" cy="184.6" r="8.3"/><circle cx="79.2" cy="173.5" r="7.6"/><circle cx="80.2" cy="159.8" r="6.8"/><circle cx="78.6" cy="143.8" r="8.4"/><circle cx="79.3" cy="131.1" r="7.2"/><circle cx="85.5" cy="125.5" r="8.5"/><circle cx="91.3" cy="119.8" r="8.9"/></g><path d="M87.6 126.9C89.3 126.1 91.7 126.2 94.0 126.3C96.3 126.4 99.4 126.6 101.2 127.5C103.0 128.5 103.0 130.3 104.8 131.8C106.5 133.3 109.9 133.8 111.6 136.4C113.3 139.1 114.5 143.8 114.9 147.7C115.3 151.6 114.8 156.6 114.0 159.8C113.2 163.0 111.0 164.6 109.9 166.6C108.8 168.6 107.3 169.8 107.4 171.8C107.6 173.7 110.6 176.0 110.8 178.5C111.0 181.1 110.2 184.6 108.4 187.1C106.7 189.7 103.0 193.0 100.4 193.9C97.7 194.8 95.3 192.8 92.4 192.5C89.4 192.3 85.4 193.4 82.8 192.2C80.1 191.0 77.7 187.9 76.3 185.3C74.9 182.7 74.0 179.5 74.3 176.7C74.5 173.9 77.6 172.1 77.7 168.3C77.8 164.6 75.4 158.8 74.9 154.3C74.4 149.7 74.2 144.1 74.9 141.1C75.5 138.0 77.3 137.4 78.7 135.8C80.2 134.1 82.1 132.6 83.6 131.2C85.0 129.7 85.9 127.7 87.6 126.9Z" fill="#4e9a0c" opacity="0.3"/><path d="M104.7 126.2C106.3 125.5 108.4 125.6 110.4 125.7C112.4 125.8 115.2 125.9 116.8 126.7C118.4 127.5 118.4 129.1 120.0 130.3C121.5 131.5 124.5 131.9 126.0 134.1C127.5 136.3 128.6 140.2 128.9 143.5C129.3 146.7 128.9 151.0 128.2 153.6C127.4 156.2 125.5 157.6 124.5 159.3C123.6 160.9 122.2 161.9 122.3 163.6C122.5 165.2 125.2 167.1 125.3 169.2C125.4 171.4 124.8 174.3 123.2 176.4C121.7 178.5 118.4 181.2 116.1 182.0C113.7 182.7 111.6 181.1 109.0 180.9C106.4 180.7 102.8 181.6 100.4 180.6C98.1 179.6 96.0 177.0 94.7 174.8C93.5 172.7 92.7 170.0 92.9 167.7C93.1 165.3 95.8 163.8 95.9 160.7C96.0 157.6 93.9 152.8 93.5 149.0C93.0 145.2 92.9 140.6 93.5 138.0C94.0 135.4 95.6 135.0 96.9 133.6C98.1 132.2 99.8 131.0 101.2 129.7C102.5 128.5 103.2 126.8 104.7 126.2Z" fill="#68b414" opacity="0.35"/>
<g fill="#5e3b22"><path d="M89.5 277L96.4 277L94.4 168L93.0 154L91.5 168Z"/><path d="M92.1 175.6L83.4 155.2L89.9 176.4Z"/><path d="M94.5 174.2L98.1 150.0L92.5 173.8Z"/><path d="M96.4 176.4L105.9 149.1L94.6 175.6Z"/><path d="M91.1 183.6L79.1 165.5L89.9 184.4Z"/><path d="M96.5 172.5L108.4 160.3L95.5 171.5Z"/><path d="M87.2 164.6L82.0 163.0L86.8 165.4Z"/><path d="M101.2 160.4L106.0 157.0L100.8 159.6Z"/></g>
<path d="M18.0 132.0C20.7 116.2 28.6 131.2 34.0 131.0C39.4 130.8 45.6 130.2 50.5 131.0C55.4 131.8 60.9 132.3 63.5 135.5C66.1 138.7 66.2 144.2 66.0 150.0C65.8 155.8 61.7 164.7 62.0 170.0C62.3 175.3 66.7 178.3 68.0 182.0C69.3 185.7 70.5 187.7 70.0 192.0C69.5 196.3 67.5 203.3 65.0 208.0C62.5 212.7 58.8 217.3 55.0 220.0C51.2 222.7 48.2 223.0 42.0 224.0C35.8 225.0 22.0 241.3 18.0 226.0C14.0 210.7 15.3 147.8 18.0 132.0Z" fill="#5da90e"/><g fill="#5da90e"><circle cx="29.5" cy="137.6" r="7.4"/><circle cx="43.6" cy="137.9" r="7.4"/><circle cx="55.8" cy="141.6" r="8.9"/><circle cx="61.7" cy="150.0" r="8.3"/><circle cx="59.8" cy="164.9" r="6.8"/><circle cx="58.6" cy="175.6" r="6.7"/><circle cx="63.6" cy="183.5" r="6.8"/><circle cx="62.9" cy="193.1" r="8.8"/><circle cx="58.2" cy="206.1" r="8.5"/><circle cx="48.8" cy="215.6" r="6.8"/><circle cx="38.4" cy="216.7" r="8.5"/><circle cx="28.0" cy="218.0" r="8.9"/><circle cx="22.7" cy="212.1" r="8.1"/><circle cx="23.3" cy="198.1" r="7.3"/><circle cx="25.0" cy="184.4" r="7.8"/><circle cx="24.3" cy="171.9" r="6.7"/><circle cx="23.2" cy="158.6" r="6.4"/><circle cx="23.8" cy="146.0" r="8.9"/></g><path d="M23.8 148.7C25.4 138.2 30.3 148.1 33.7 148.0C37.1 147.9 40.9 147.5 43.9 148.0C47.0 148.5 50.4 148.9 52.0 151.0C53.6 153.1 53.7 156.7 53.5 160.5C53.4 164.3 50.9 170.2 51.1 173.7C51.3 177.3 54.0 179.2 54.8 181.7C55.6 184.1 56.3 185.4 56.0 188.3C55.7 191.1 54.5 195.7 52.9 198.8C51.4 201.9 49.1 205.0 46.7 206.7C44.3 208.5 42.5 208.7 38.7 209.4C34.8 210.0 26.3 220.8 23.8 210.7C21.3 200.6 22.1 159.1 23.8 148.7Z" fill="#4e9a0c" opacity="0.3"/>
<g fill="#5e3b22"><path d="M34 198L38.200 196L37.800 180L35 178Z"/><path d="M36.9 190.5L51.9 178.2L36.1 189.5Z"/><path d="M36.8 200.5L50.0 190.0L36.2 199.5Z"/></g>
<!-- bench -->
<g>
<rect x="569.800" y="270" width="1.600" height="26" fill="#5a4a6a"/>
<path d="M566 271.200 L634 271.800 L634 278 L566 278Z" fill="#e0a650"/>
<path d="M566 279.600 L634 280 L634 286.200 L566 286Z" fill="#dfa14a"/>
<path d="M566 287.600 L634 288 L634 294 L566 293.800Z" fill="#dd9f48"/>
<path d="M565.700 295.200 L634 295.600 L634 303.600 L557.500 304.300Z" fill="#e3ae5c"/>
<path d="M561.500 299.600 L634 299.300" stroke="#d39a45" stroke-width=".7" fill="none"/>
<path d="M557.500 304.300 L634 303.600" stroke="#c88d3a" stroke-width="1" fill="none"/>
<path d="M565 304.500 L568.300 304.500 L568.300 308.300 L572.400 309.300 L572.300 311.600 L562.800 316.600 L560.200 316.200 L560.300 313.400 L565 309.300Z" fill="#676767"/>
</g>

<!-- big branch -->
<g>
<path d="M104.0 123.5C104.0 122.2 109.3 120.5 112.0 119.0C114.7 117.5 116.4 116.0 120.0 114.7C123.6 113.4 129.5 112.2 133.8 111.2C138.1 110.2 143.2 109.5 145.9 108.6C148.6 107.7 149.2 107.6 150.2 106.0C151.2 104.4 150.9 101.4 151.9 99.1C152.9 96.8 154.3 94.2 156.2 92.2C158.1 90.2 159.6 88.2 163.1 87.1C166.6 85.9 176.3 85.2 176.9 85.3C177.5 85.4 169.3 86.8 166.6 87.9C163.9 89.1 162.1 90.3 160.5 92.2C158.9 94.1 158.0 96.8 157.1 99.1C156.2 101.4 155.9 103.6 155.3 106.0C154.7 108.4 151.9 112.3 153.5 113.5C155.1 114.7 160.9 113.7 164.8 112.9C168.7 112.1 172.9 109.8 176.9 108.6C180.9 107.4 185.8 106.1 189.0 105.7C192.2 105.3 196.5 105.5 195.9 106.0C195.3 106.5 189.5 107.3 185.5 108.6C181.5 109.9 175.3 112.2 171.7 113.8C168.1 115.4 164.3 116.8 164.0 118.1C163.7 119.4 167.6 120.9 170.0 121.6C172.4 122.3 176.3 122.0 178.6 122.4C180.9 122.8 182.6 123.1 183.8 124.1C185.0 125.1 186.2 128.1 185.9 128.4C185.6 128.7 184.5 126.5 182.1 125.9C179.7 125.3 174.9 125.3 171.7 125.0C168.5 124.7 166.0 124.7 163.1 124.1C160.2 123.5 156.8 121.9 154.5 121.6C152.2 121.3 151.0 121.8 149.3 122.4C147.6 123.0 145.4 125.1 144.1 125.0C142.8 124.9 141.9 122.8 141.6 121.6C141.2 120.4 142.7 118.4 142.0 117.8C141.3 117.2 139.4 117.5 137.2 118.1C135.0 118.7 131.1 120.4 128.6 121.6C126.1 122.8 124.8 124.6 122.0 125.5C119.2 126.4 115.0 127.3 112.0 127.0C109.0 126.7 104.0 124.8 104.0 123.5Z" fill="#84511a"/>
<path d="M122 125.500 C128 122 137 118.500 142 117.800 C141.500 120 141.800 122 144.100 125 C147 123 151 121.800 154.500 121.600 C161 123.500 170 125 182.100 125.900 L185.900 128.400 C185.500 126 184.500 124.500 183 124 C176 123.500 170 123 163 122.300 C158 121 155 120 152 119.500 C148 120 146 121 144.500 122 C143.500 120.500 143.300 118.500 143.500 116 C137 117 128 120.500 120 124Z" fill="#5e380d" opacity=".45"/>
<path d="M30.0 138.3C30.8 131.4 31.9 138.2 34.8 138.3C37.7 138.4 42.8 139.2 47.2 138.8C51.6 138.5 56.7 137.5 61.0 136.2C65.3 134.9 68.8 132.7 73.1 131.0C77.4 129.3 82.6 127.1 86.9 125.9C91.2 124.7 95.2 124.0 99.0 123.6C102.8 123.2 106.5 123.1 110.0 123.3C113.5 123.5 116.6 124.3 120.0 125.0C123.4 125.7 126.9 126.4 130.3 127.6C133.8 128.8 136.7 130.2 140.7 131.9C144.7 133.6 149.9 136.3 154.5 137.9C159.1 139.5 164.0 140.7 168.3 141.4C172.6 142.1 176.3 142.5 180.3 142.2C184.3 141.9 188.7 141.0 192.4 139.7C196.2 138.4 199.9 136.4 202.8 134.5C205.7 132.6 207.0 131.3 209.7 128.4C212.3 125.5 215.5 120.0 218.7 116.9C221.9 113.8 224.9 111.9 229.0 109.7C233.1 107.5 238.7 105.2 243.5 103.5C248.3 101.8 253.8 100.2 258.0 99.7C262.1 99.2 264.6 99.5 268.4 100.4C272.2 101.3 277.3 104.1 280.8 104.9C284.3 105.8 289.5 105.2 289.5 105.5C289.5 105.8 284.3 107.3 280.8 107.0C277.3 106.7 272.2 104.1 268.4 103.5C264.6 102.9 261.4 102.8 258.0 103.5C254.6 104.2 251.1 105.7 247.7 107.6C244.2 109.5 240.8 111.9 237.3 114.8C233.9 117.7 230.1 121.8 227.0 125.2C223.9 128.7 221.1 132.4 218.7 135.5C216.3 138.6 213.9 141.4 212.5 143.8C211.1 146.2 209.4 147.9 210.4 150.0C211.4 152.1 215.6 154.7 218.7 156.3C221.8 157.9 225.6 159.2 229.0 159.4C232.4 159.6 235.6 158.5 239.4 157.3C243.2 156.1 247.7 153.5 251.8 152.1C255.9 150.7 260.1 149.4 264.2 149.0C268.3 148.6 273.2 148.9 276.6 149.4C280.1 149.9 285.2 151.8 284.9 152.1C284.6 152.4 278.1 151.5 274.6 151.5C271.2 151.5 267.6 151.3 264.2 152.1C260.8 152.9 257.4 154.6 253.9 156.3C250.5 158.0 246.5 160.6 243.5 162.5C240.5 164.4 238.4 165.9 236.0 167.5C233.6 169.1 231.9 170.9 229.0 171.8C226.1 172.7 222.5 172.8 218.7 172.8C214.9 172.8 210.1 172.7 206.3 171.8C202.5 170.9 200.1 169.5 195.9 167.6C191.8 165.7 186.2 162.3 181.4 160.4C176.6 158.5 171.0 157.2 166.9 156.3C162.8 155.4 157.3 153.0 156.6 154.7C155.9 156.4 159.7 163.2 162.8 166.6C165.9 170.0 171.1 172.5 175.2 174.9C179.3 177.3 183.8 179.0 187.6 181.1C191.4 183.2 198.3 187.1 198.0 187.3C197.7 187.5 190.0 184.0 185.5 182.1C181.0 180.2 175.6 178.0 171.1 175.9C166.6 173.8 162.4 172.3 158.6 169.7C154.8 167.1 151.0 162.8 148.3 160.4C145.6 158.0 144.2 156.8 142.4 155.5C140.6 154.2 139.3 153.6 137.2 152.3C135.1 151.0 132.9 148.8 130.0 147.6C127.1 146.4 123.4 145.7 119.7 145.2C116.0 144.7 111.6 144.3 107.6 144.5C103.6 144.7 99.8 145.3 95.5 146.2C91.2 147.1 86.9 148.2 81.7 150.0C76.5 151.8 70.2 154.2 64.5 156.9C58.8 159.6 52.2 163.2 47.2 166.4C42.2 169.6 37.7 173.7 34.8 175.9C31.9 178.1 30.8 185.8 30.0 179.5C29.2 173.2 29.2 145.2 30.0 138.3Z" fill="#84511a"/>
<path d="M30.0 160.0C32.9 155.7 41.5 155.8 47.2 153.5C53.0 151.2 58.8 148.3 64.5 146.0C70.2 143.7 76.5 141.2 81.7 139.5C86.9 137.8 91.2 136.8 95.5 136.0C99.8 135.2 103.6 134.6 107.6 134.5C111.6 134.4 116.0 134.9 119.7 135.5C123.4 136.1 126.3 136.8 130.0 138.0C133.7 139.2 137.9 141.3 142.0 143.0C146.1 144.7 150.1 146.6 154.5 148.0C158.9 149.4 163.8 150.6 168.3 151.5C172.8 152.4 176.8 152.6 181.4 153.5C186.0 154.4 191.8 155.6 195.9 157.0C200.1 158.4 202.5 160.6 206.3 162.0C210.1 163.4 214.9 164.8 218.7 165.5C222.5 166.2 224.9 167.8 229.0 166.5C233.1 165.2 239.3 160.2 243.5 158.0C247.7 155.8 250.5 154.2 253.9 153.0C257.4 151.8 260.8 150.9 264.2 150.5C267.6 150.1 272.9 150.1 274.6 150.3C276.3 150.5 276.3 151.2 274.6 151.5C272.9 151.8 267.6 151.3 264.2 152.1C260.8 152.9 257.4 154.6 253.9 156.3C250.5 158.0 246.5 160.6 243.5 162.5C240.5 164.4 238.4 165.9 236.0 167.5C233.6 169.1 231.9 170.9 229.0 171.8C226.1 172.7 222.5 172.8 218.7 172.8C214.9 172.8 210.1 172.7 206.3 171.8C202.5 170.9 200.1 169.5 195.9 167.6C191.8 165.7 186.2 162.3 181.4 160.4C176.6 158.5 171.0 157.2 166.9 156.3C162.8 155.4 159.7 154.0 156.6 154.7C153.5 155.4 150.7 160.3 148.3 160.4C145.9 160.5 144.2 156.8 142.4 155.5C140.6 154.2 139.3 153.6 137.2 152.3C135.1 151.0 132.9 148.8 130.0 147.6C127.1 146.4 123.4 145.7 119.7 145.2C116.0 144.7 111.6 144.3 107.6 144.5C103.6 144.7 99.8 145.3 95.5 146.2C91.2 147.1 86.9 148.2 81.7 150.0C76.5 151.8 70.2 154.2 64.5 156.9C58.8 159.6 52.2 163.2 47.2 166.4C42.2 169.6 37.7 173.7 34.8 175.9C31.9 178.1 30.8 182.2 30.0 179.5C29.2 176.8 27.1 164.3 30.0 160.0Z" fill="#6a400f" opacity=".8"/>
<path d="M210.4 150.0C212.5 148.5 211.1 146.2 212.5 143.8C213.9 141.4 216.3 138.6 218.7 135.5C221.1 132.4 223.9 128.7 227.0 125.2C230.1 121.8 233.9 117.7 237.3 114.8C240.8 111.9 244.2 109.5 247.7 107.6C251.1 105.7 254.6 104.2 258.0 103.5C261.4 102.8 266.7 103.8 268.4 103.5C270.1 103.2 270.1 102.3 268.4 102.0C266.7 101.7 261.6 101.0 258.0 101.5C254.4 102.0 250.7 103.3 247.0 105.0C243.3 106.7 239.7 108.8 236.0 111.5C232.3 114.2 228.3 117.8 225.0 121.0C221.7 124.2 218.7 127.7 216.0 131.0C213.3 134.3 211.0 138.2 209.0 141.0C207.0 143.8 205.5 146.0 204.0 148.0C202.5 150.0 198.9 152.7 200.0 153.0C201.1 153.3 208.3 151.5 210.4 150.0Z" fill="#6a400f" opacity=".7"/>
<path d="M232 165.500 C242 166.500 252 167.500 262.500 169.800 C252 169.200 242 168.800 231 169Z" fill="#7a4a14"/>
<!-- leaves -->
<path d="M193.500 188.500 C188 190 184.300 195.500 184.600 202.800 C190.500 201.500 194.500 197 195 190Z" fill="#e8821c"/>
<path d="M196.800 189.500 C200.800 191.500 204 196.500 201.200 205.300 C196.500 202.500 194 197 194.800 190.500Z" fill="#f0a52c"/>
<path d="M283 109.500 C279.500 110.500 277.800 114 278.600 118.600 C282.500 117.500 284.300 114 284 110.200Z" fill="#e06a1a"/>
<path d="M285 109.200 C288.500 109.500 290.600 112.500 289.800 116.900 C286 116.200 284 113.500 284 110.200Z" fill="#efb04a"/>
<path d="M286.800 156.700 C284.300 158.500 283.800 161.500 286.300 164.100 C289.300 162.300 290 159 288 156.900Z" fill="#e7801c"/>
<g stroke="#8a5a1a" stroke-width=".7" fill="none"><path d="M197.500 186.800 L195 190M197.500 186.800 L196 190.500M288.500 106 L284.200 110M285 152.300 L287 157"/></g>
</g>
<!-- stump -->
<g>
<path d="M35 335 L143 335.500 C141 345 138.600 352 138.600 360 C138 378 139 386 144 393 C148 399 152 404 158 410 L35 410Z" fill="#80531a"/>
<path d="M143.500 335.500 C141 345 138.600 352 138.600 360 C138 378 139 386 144 393 C148 399 152 404 158 410 L154 410 C146 402 138 392 134.500 380 C131.500 368 131.500 352 134 338Z" fill="#5f3b0e" opacity=".7"/>
<g stroke="#6b4312" stroke-width=".8" fill="none" opacity=".8"><path d="M48 350 Q47 365 48.500 378M64 372 Q60 385 54 396M80 352 L79.500 357M90 395 Q92 402 92 409M111 362 Q110 385 111 400M121 345 L120.500 355"/></g>
<path d="M35 320.800 C40 318.500 45 317.600 49.800 317.400 C60 317 70 317.800 79.500 318.200 C90 318.600 100 318.800 109.300 319.800 C117 320.800 124 322.500 129 324.800 C135 327.500 141 329.500 144 331.700 C145.200 333 145 334.500 144.300 335.300 C142.500 337 140 337.800 137 338.600 C131 340.200 125 341.500 119.200 342.600 C112 344.200 106 345.500 99.300 346.600 C92 348 86 349 79.500 349 C72 349 66 348.400 59.700 347.600 C54 346.800 50 346.200 45.900 345.600 C42 345 38 344.500 35 344Z" fill="#e3bd63"/>
<g stroke="#c39b3c" stroke-width="1.300" fill="none" stroke-linecap="round"><path d="M66 319.500 Q85 318.500 104 321M121 327 Q136 330 133 334 Q125 338 106 340.500M128 333.500 Q118 337 98 339M59 330 Q44 330.500 43 333 Q45 335.500 58 335.500M93 328 Q105 328.500 105 330.500 Q104 332.500 92 332.500"/></g>
<path d="M78.500 324.500 L80 329 L91 328.800 L81 331.800 L84.500 337.500 L77.500 332.800 L66.500 334 L75.500 330.500 L73 327 L77.500 329Z" fill="#7c5c12"/>
<path d="M95.200 384.800 C89 384 83.500 379.500 82.300 374.500 C81.200 369.800 84.500 366.500 88.500 366.800 C91.500 367 93.200 368.800 93.800 370.600 C94 367 96.500 362 101.500 361.300 C106 360.800 108 365 107.500 370 C107 376 102.500 384 95.200 384.800Z" fill="none" stroke="#5a370e" stroke-width="1"/>
</g>

<!-- monster -->
<g>
<g fill="#d9561a">
<path d="M216 263.700 L256 262 L247 288.500Z"/><path d="M204 297 L246 289.600 L239 314Z"/><path d="M198.400 328.800 L238 317.800 L236 344Z"/>
<path d="M427.600 258.800 L383 262 L405.500 282Z"/><path d="M450.500 293.600 L406.500 288.500 L421 312.500Z"/><path d="M460.200 330 L424 321.200 L430.500 344.300Z"/>
</g>
<path d="M234.2 362.0C234.2 357.5 234.0 357.1 234.2 348.6C234.4 340.1 234.1 344.5 234.7 336.5C235.3 328.5 235.0 332.5 235.9 324.5C236.8 316.5 236.1 320.5 237.5 312.4C238.9 304.3 237.9 308.3 240.2 300.3C242.5 292.3 241.3 296.3 244.3 288.3C247.3 280.3 245.6 283.4 249.1 276.2C252.6 269.0 250.4 275.3 254.7 266.6C259.0 257.9 251.9 261.5 262.0 250.0C272.1 238.5 265.7 240.0 285.0 232.0C304.3 224.0 296.7 226.0 320.0 226.0C343.3 226.0 335.7 224.0 355.0 232.0C374.3 240.0 367.9 240.1 378.0 250.0C388.1 259.9 378.0 253.0 385.3 261.7C392.6 270.4 392.1 267.3 399.8 276.2C407.5 285.1 402.9 280.3 408.3 288.3C413.7 296.3 411.6 292.3 416.0 300.3C420.4 308.3 418.3 304.3 421.5 312.4C424.7 320.5 423.3 316.5 425.7 324.5C428.1 332.5 427.2 328.5 428.8 336.5C430.4 344.5 429.6 340.1 430.5 348.6C431.4 357.1 431.1 357.5 431.4 362.0Z" fill="#a11f23"/>
<path d="M234.2 362.0C234.2 357.5 234.0 357.1 234.2 348.6C234.4 340.1 234.1 344.5 234.7 336.5C235.3 328.5 235.0 332.5 235.9 324.5C236.8 316.5 236.1 320.5 237.5 312.4C238.9 304.3 237.9 308.3 240.2 300.3C242.5 292.3 241.3 296.3 244.3 288.3C247.3 280.3 245.6 283.4 249.1 276.2C252.6 269.0 250.4 275.3 254.7 266.6C259.0 257.9 250.2 255.5 262.0 250.0C273.8 244.5 283.8 244.5 290.0 250.0C296.2 255.5 286.5 257.9 280.5 266.6C274.5 275.3 276.8 269.0 272.0 276.2C267.2 283.4 270.0 276.2 266.0 288.3C262.0 300.4 262.7 296.3 260.0 312.4C257.3 328.5 258.6 320.0 258.0 336.5C257.4 353.0 258.2 353.5 258.3 362.0Z" fill="#8f1b20" opacity=".5"/>
<ellipse cx="273" cy="360.700" rx="38.800" ry="12.200" fill="#8c1a1f"/>
<ellipse cx="392.700" cy="360.700" rx="38.800" ry="12.400" fill="#8c1a1f"/>
<!-- ears -->
<path d="M225.300 202.200 A32.300 32 0 0 1 289.900 203 Z" fill="#a11f23"/>
<path d="M342.400 165.900 A32.500 32.500 0 0 1 402.400 190.700 Z" fill="#a11f23"/>
<!-- eyes -->
<circle cx="260.300" cy="235.400" r="35" fill="#a11f23"/><circle cx="260.300" cy="235.400" r="27.100" fill="#fff"/><circle cx="263.800" cy="226.900" r="5.200" fill="#000"/>
<circle cx="375.200" cy="228.800" r="35.100" fill="#a11f23"/><circle cx="375.200" cy="228.800" r="27.200" fill="#fff"/><circle cx="371.400" cy="221.300" r="5.200" fill="#000"/>
<circle cx="320.400" cy="239.600" r="17.300" fill="#000"/>
<path d="M289 285.800 Q320 294.500 355 281" fill="none" stroke="#0a0a0a" stroke-width="2.300" stroke-linecap="round"/>
</g>
</g>
</svg>
<svg class="abs" style="left:0;top:340px" width="662" height="31" viewBox="0 409 662 31">
<path d="M327 419.600 L337.500 425.300 L327 431Z" fill="#c4c4c4"/>
<!-- zoom/fit icon -->
<rect x="620" y="415.200" width="7" height="12.800" fill="#b9b9b9"/>
<rect x="612.600" y="421.400" width="12.200" height="6.600" fill="#b4b4b4" stroke="#232323" stroke-width=".9"/>
<!-- transparency / person icon -->
<defs><pattern id="hat" width="4" height="4" patternUnits="userSpaceOnUse" patternTransform="rotate(-45)"><rect width="4" height="1.800" fill="#c4c4c4"/><rect y="1.800" width="4" height="2.200" fill="#333"/></pattern></defs>
<rect x="637" y="415.200" width="13" height="13.600" fill="url(#hat)"/>
<path d="M638 428.800 C638 425.500 640 424.800 642 424.200 C641 423 640.600 421.500 640.600 420 C640.600 418 641.800 416.800 643.500 416.800 C645.200 416.800 646.400 418 646.400 420 C646.400 421.500 646 423 645 424.200 C647 424.800 649 425.500 649 428.800Z" fill="#bcbcbc" stroke="#262626" stroke-width="1"/>
</svg>

</div>
<div id="vdiv" class="abs"></div>
<!-- ===== triggers panel ===== -->
<div id="rightpanel" class="abs"><div class="abs" style="left:0;top:0;width:334px;height:303px;overflow:hidden">
<div class="card" style="left:14.40px;top:27.40px;width:63.700px;height:63.700px"><svg width="63.700" height="63.700" viewBox="0 0 64 64"><use href="#e-fear"/></svg></div>
<div class="card" style="left:92.25px;top:27.40px;width:63.700px;height:63.700px"><svg width="63.700" height="63.700" viewBox="0 0 64 64"><use href="#e-angry"/></svg></div>
<div class="card" style="left:170.10px;top:27.40px;width:63.700px;height:63.700px"><svg width="63.700" height="63.700" viewBox="0 0 64 64"><use href="#e-smirk"/></svg></div>
<div class="card" style="left:247.95px;top:27.40px;width:63.700px;height:63.700px"><svg width="63.700" height="63.700" viewBox="0 0 64 64"><use href="#e-heart"/></svg></div>
<div class="card" style="left:14.40px;top:105.25px;width:63.700px;height:63.700px"><svg width="63.700" height="63.700" viewBox="0 0 64 64"><use href="#e-dizzy"/></svg></div>
<div class="card" style="left:92.25px;top:105.25px;width:63.700px;height:63.700px"><svg width="63.700" height="63.700" viewBox="0 0 64 64"><use href="#e-sad"/></svg></div>
<div class="card" style="left:170.10px;top:105.25px;width:63.700px;height:63.700px"><svg width="63.700" height="63.700" viewBox="0 0 64 64"><use href="#e-q"/></svg></div>
<div class="card" style="left:247.95px;top:105.25px;width:63.700px;height:63.700px"><svg width="63.700" height="63.700" viewBox="0 0 64 64"><use href="#e-smile"/></svg></div>
<div class="card" style="left:14.40px;top:183.10px;width:63.700px;height:63.700px"><svg width="63.700" height="63.700" viewBox="0 0 64 64"><use href="#e-fire"/></svg></div>
<div class="card" style="left:92.25px;top:183.10px;width:63.700px;height:63.700px"><svg width="63.700" height="63.700" viewBox="0 0 64 64"><use href="#e-lookup"/></svg></div>
<div class="card" style="left:170.10px;top:183.10px;width:63.700px;height:63.700px"><svg width="63.700" height="63.700" viewBox="0 0 64 64"><use href="#e-sleepy"/></svg></div>
<div class="card" style="left:247.95px;top:183.10px;width:63.700px;height:63.700px"><svg width="63.700" height="63.700" viewBox="0 0 64 64"><use href="#e-up"/></svg></div>
<div class="card" style="left:14.40px;top:260.95px;width:63.700px;height:63.700px"><svg width="63.700" height="63.700" viewBox="0 0 64 64"><use href="#e-music"/></svg></div>
</div>
<div class="abs" style="left:328px;top:14px;width:6px;height:289px;background:#1c1c1c"></div>
<div class="abs" style="left:328px;top:14px;width:6px;height:258px;background:#2d2d2d;border-radius:3px 0 0 3px"></div></div>
<div id="hdiv2" class="abs"></div>
<!-- ===== timeline ===== -->
<div id="timeline" class="abs"><svg class="abs" style="left:0;top:0;overflow:visible" width="1000" height="137" viewBox="0 443 1000 137">
<rect x="16" y="515" width="968.800" height="51.39999999999998" rx="2.500" fill="#f2a640"/>
<rect x="29.5" y="515" width="941.8" height="51.39999999999998" fill="#d08b3c"/>
<rect x="29.5" y="516.2" width="941.8" height="48.99999999999998" fill="#1e3d6c"/>
<rect x="93.8" y="516.2" width="57.2" height="48.99999999999998" fill="#35517b"/>
<rect x="208" y="516.2" width="69" height="48.99999999999998" fill="#a88250"/>
<rect x="408.2" y="516.2" width="187.09999999999997" height="48.99999999999998" fill="#35517b"/>
<rect x="631" y="516.2" width="26.5" height="48.99999999999998" fill="#35517b"/>
<rect x="777.3" y="516.2" width="69.10000000000002" height="48.99999999999998" fill="#35517b"/>
<rect x="939.7" y="516.2" width="31.59999999999991" height="48.99999999999998" fill="#35517b"/>
<clipPath id="wf"><path d="M29.5 565.1999999999999L29.5 560.4L30.6 559.2L31.7 560.3L32.8 561.1L33.9 560.0L35.0 561.4L36.1 561.4L37.2 559.8L38.3 559.0L39.4 559.9L40.5 558.6L41.6 561.4L42.7 558.5L43.8 560.5L44.9 560.3L46.0 560.3L47.1 560.4L48.2 559.0L49.3 559.4L50.4 560.8L51.5 560.8L52.6 559.6L53.7 559.4L54.8 559.1L55.9 561.6L57.0 559.2L58.1 559.1L59.2 561.4L60.3 559.6L61.4 561.4L62.5 559.1L63.6 561.3L64.7 561.3L65.8 559.5L66.9 560.1L68.0 561.1L69.1 561.3L70.2 561.3L71.3 561.0L72.4 559.1L73.5 560.8L74.6 561.1L75.7 559.4L76.8 561.3L77.9 561.0L79.0 559.6L80.1 560.8L81.2 561.4L82.3 561.0L83.4 560.6L84.5 559.1L85.6 560.1L86.7 561.1L87.8 559.2L88.9 558.5L90.0 557.2L91.1 561.1L92.2 559.3L93.3 560.5L94.4 561.5L95.5 561.0L96.6 560.9L97.7 560.0L98.8 561.1L99.9 561.4L101.0 560.1L102.1 560.0L103.2 559.2L104.3 561.6L105.4 560.4L106.5 561.1L107.6 560.1L108.7 560.7L109.8 556.6L110.9 557.3L112.0 559.7L113.1 559.2L114.2 556.3L115.3 560.3L116.4 560.8L117.5 561.4L118.6 559.7L119.7 559.7L120.8 559.5L121.9 560.7L123.0 559.3L124.1 560.5L125.2 559.4L126.3 560.0L127.4 560.1L128.5 561.4L129.6 559.0L130.7 559.7L131.8 559.7L132.9 560.5L134.0 561.4L135.1 561.5L136.2 560.3L137.3 559.8L138.4 560.0L139.5 558.8L140.6 559.8L141.7 561.2L142.8 559.9L143.9 559.3L145.0 559.9L146.1 560.5L147.2 559.2L148.3 560.6L149.4 560.8L150.5 560.3L151.6 559.4L152.7 559.1L153.8 561.2L154.9 560.9L156.0 560.5L157.1 560.3L158.2 559.4L159.3 560.4L160.4 561.5L161.5 561.5L162.6 560.1L163.7 557.8L164.8 557.3L165.9 561.0L167.0 561.5L168.1 560.4L169.2 559.9L170.3 559.1L171.4 561.1L172.5 558.7L173.6 559.7L174.7 560.9L175.8 559.8L176.9 560.0L178.0 560.6L179.1 559.2L180.2 559.2L181.3 561.3L182.4 560.0L183.5 560.6L184.6 559.3L185.7 559.1L186.8 559.9L187.9 559.7L189.0 559.9L190.1 561.0L191.2 559.1L192.3 560.2L193.4 560.8L194.5 559.4L195.6 561.4L196.7 560.2L197.8 557.2L198.9 561.4L200.0 561.2L201.1 559.6L202.2 561.2L203.3 557.2L204.4 557.3L205.5 560.3L206.6 561.4L207.7 560.2L208.8 559.7L209.9 560.2L211.0 560.1L212.1 560.6L213.2 559.3L214.3 559.4L215.4 560.2L216.5 561.1L217.6 560.3L218.7 561.5L219.8 560.3L220.9 559.5L222.0 560.3L223.1 561.4L224.2 560.5L225.3 559.2L226.4 560.4L227.5 560.5L228.6 559.3L229.7 560.8L230.8 560.0L231.9 561.3L233.0 561.5L234.1 561.0L235.2 560.8L236.3 560.0L237.4 559.7L238.5 560.3L239.6 561.1L240.7 560.5L241.8 560.5L242.9 561.2L244.0 560.0L245.1 560.2L246.2 560.0L247.3 561.0L248.4 559.5L249.5 560.8L250.6 559.2L251.7 559.0L252.8 561.3L253.9 559.7L255.0 561.3L256.1 560.5L257.2 561.3L258.3 557.9L259.4 559.8L260.5 559.1L261.6 560.3L262.7 560.3L263.8 561.1L264.9 558.7L266.0 560.3L267.1 561.2L268.2 561.1L269.3 559.0L270.4 561.4L271.5 559.1L272.6 559.6L273.7 560.4L274.8 560.5L275.9 561.6L277.0 559.4L278.1 560.4L279.2 560.5L280.3 561.2L281.4 561.6L282.5 559.5L283.6 559.4L284.7 560.5L285.8 560.3L286.9 559.5L288.0 559.2L289.1 559.6L290.2 560.5L291.3 559.3L292.4 559.6L293.5 560.5L294.6 561.4L295.7 558.2L296.8 559.9L297.9 561.0L299.0 559.9L300.1 559.9L301.2 560.2L302.3 559.0L303.4 559.8L304.5 556.3L305.6 559.7L306.7 560.6L307.8 561.1L308.9 561.3L310.0 559.2L311.1 560.3L312.2 560.1L313.3 559.9L314.4 561.4L315.5 559.6L316.6 559.2L317.7 560.4L318.8 560.3L319.9 561.4L321.0 560.5L322.1 560.0L323.2 560.9L324.3 560.1L325.4 559.7L326.5 561.6L327.6 561.5L328.7 559.6L329.8 559.3L330.9 561.5L332.0 559.1L333.1 559.2L334.2 560.4L335.3 561.0L336.4 559.2L337.5 560.4L338.6 559.5L339.7 561.3L340.8 560.4L341.9 561.5L343.0 561.3L344.1 559.9L345.2 560.9L346.3 560.5L347.4 560.2L348.5 559.1L349.6 561.0L350.7 559.3L351.8 560.0L352.9 560.9L354.0 560.1L355.1 560.0L356.2 561.1L357.3 559.1L358.4 557.7L359.5 560.9L360.6 560.0L361.7 560.2L362.8 561.4L363.9 560.2L365.0 560.6L366.1 561.1L367.2 559.7L368.3 561.4L369.4 559.5L370.5 559.6L371.6 560.5L372.7 559.5L373.8 559.9L374.9 560.8L376.0 559.7L377.1 560.5L378.2 561.3L379.3 561.4L380.4 560.1L381.5 559.8L382.6 559.6L383.7 561.0L384.8 561.4L385.9 559.7L387.0 560.9L388.1 560.7L389.2 560.6L390.3 559.8L391.4 559.2L392.5 559.2L393.6 559.5L394.7 560.8L395.8 559.2L396.9 561.0L398.0 560.6L399.1 560.6L400.2 561.1L401.3 559.5L402.4 559.4L403.5 561.1L404.6 559.3L405.7 561.5L406.8 560.2L407.9 559.1L409.0 559.5L410.1 560.2L411.2 561.4L412.3 559.7L413.4 561.4L414.5 561.2L415.6 559.9L416.7 561.0L417.8 560.2L418.9 560.6L420.0 559.1L421.1 560.3L422.2 559.7L423.3 559.2L424.4 559.5L425.5 559.4L426.6 559.4L427.7 559.1L428.8 560.2L429.9 559.5L431.0 560.5L432.1 559.7L433.2 560.6L434.3 561.1L435.4 560.8L436.5 561.4L437.6 561.3L438.7 559.6L439.8 561.4L440.9 560.1L442.0 561.5L443.1 561.1L444.2 561.0L445.3 560.1L446.4 561.1L447.5 558.7L448.6 558.3L449.7 559.5L450.8 560.9L451.9 559.2L453.0 560.2L454.1 560.3L455.2 561.5L456.3 559.5L457.4 560.2L458.5 560.9L459.6 559.9L460.7 561.6L461.8 560.6L462.9 559.7L464.0 561.2L465.1 560.8L466.2 559.3L467.3 559.9L468.4 560.9L469.5 561.2L470.6 561.6L471.7 559.4L472.8 561.4L473.9 559.7L475.0 560.4L476.1 559.1L477.2 559.4L478.3 559.5L479.4 559.2L480.5 559.5L481.6 560.2L482.7 561.2L483.8 560.8L484.9 561.4L486.0 560.4L487.1 560.7L488.2 561.3L489.3 560.4L490.4 559.4L491.5 561.6L492.6 559.8L493.7 560.1L494.8 561.6L495.9 559.5L497.0 560.0L498.1 560.6L499.2 560.8L500.3 560.6L501.4 560.9L502.5 559.7L503.6 559.1L504.7 559.7L505.8 559.5L506.9 561.2L508.0 559.8L509.1 561.1L510.2 559.4L511.3 561.4L512.4 561.2L513.5 560.5L514.6 559.2L515.7 560.3L516.8 559.6L517.9 560.6L519.0 558.2L520.1 559.8L521.2 559.5L522.3 557.9L523.4 560.7L524.5 561.3L525.6 560.3L526.7 559.5L527.8 561.2L528.9 559.3L530.0 560.7L531.1 561.2L532.2 559.0L533.3 559.7L534.4 561.1L535.5 560.0L536.6 561.4L537.7 560.1L538.8 560.7L539.9 560.7L541.0 561.3L542.1 561.2L543.2 560.2L544.3 560.1L545.4 559.2L546.5 559.5L547.6 561.3L548.7 560.8L549.8 561.0L550.9 559.4L552.0 560.2L553.1 561.5L554.2 559.0L555.3 559.9L556.4 559.9L557.5 560.6L558.6 557.6L559.7 560.4L560.8 560.6L561.9 561.1L563.0 560.9L564.1 560.7L565.2 561.5L566.3 561.2L567.4 560.0L568.5 560.5L569.6 559.8L570.7 559.6L571.8 559.0L572.9 559.4L574.0 560.5L575.1 559.2L576.2 560.2L577.3 559.2L578.4 561.5L579.5 559.3L580.6 560.0L581.7 560.8L582.8 561.4L583.9 560.4L585.0 560.6L586.1 559.8L587.2 561.0L588.3 560.6L589.4 561.4L590.5 559.1L591.6 559.3L592.7 559.5L593.8 559.7L594.9 559.3L596.0 559.5L597.1 560.2L598.2 561.6L599.3 560.8L600.4 561.4L601.5 559.5L602.6 560.7L603.7 558.2L604.8 560.8L605.9 559.2L607.0 560.4L608.1 560.8L609.2 559.3L610.3 559.4L611.4 560.4L612.5 559.3L613.6 561.1L614.7 561.1L615.8 561.5L616.9 557.2L618.0 556.8L619.1 557.2L620.2 559.8L621.3 560.4L622.4 561.0L623.5 559.8L624.6 561.1L625.7 559.9L626.8 560.6L627.9 559.3L629.0 561.0L630.1 559.2L631.2 560.9L632.3 561.4L633.4 560.5L634.5 560.2L635.6 560.0L636.7 560.9L637.8 561.4L638.9 559.6L640.0 560.9L641.1 561.1L642.2 556.6L643.3 559.6L644.4 559.2L645.5 561.1L646.6 559.9L647.7 559.9L648.8 560.3L649.9 559.4L651.0 560.2L652.1 561.1L653.2 561.2L654.3 561.0L655.4 559.6L656.5 559.5L657.6 560.3L658.7 560.1L659.8 561.5L660.9 559.7L662.0 559.3L663.1 558.7L664.2 560.5L665.3 560.9L666.4 561.4L667.5 560.1L668.6 559.5L669.7 561.2L670.8 561.5L671.9 560.0L673.0 560.9L674.1 561.4L675.2 561.2L676.3 561.2L677.4 559.4L678.5 561.4L679.6 560.7L680.7 559.1L681.8 560.3L682.9 559.0L684.0 560.4L685.1 561.5L686.2 559.3L687.3 560.6L688.4 560.5L689.5 561.5L690.6 559.6L691.7 561.0L692.8 560.2L693.9 560.4L695.0 560.7L696.1 559.0L697.2 561.5L698.3 559.9L699.4 560.7L700.5 559.4L701.6 559.3L702.7 560.6L703.8 560.6L704.9 561.0L706.0 561.1L707.1 561.2L708.2 561.0L709.3 560.8L710.4 554.5L711.5 554.9L712.6 560.6L713.7 559.8L714.8 559.0L715.9 560.9L717.0 559.2L718.1 560.9L719.2 561.2L720.3 560.7L721.4 559.7L722.5 561.5L723.6 560.6L724.7 552.8L725.8 553.1L726.9 561.5L728.0 561.0L729.1 561.2L730.2 561.5L731.3 560.5L732.4 561.2L733.5 560.9L734.6 559.9L735.7 561.1L736.8 559.7L737.9 560.6L739.0 561.0L740.1 560.7L741.2 558.7L742.3 560.1L743.4 559.1L744.5 559.9L745.6 561.0L746.7 559.9L747.8 559.3L748.9 560.0L750.0 560.5L751.1 561.4L752.2 560.7L753.3 560.9L754.4 560.6L755.5 561.2L756.6 561.0L757.7 560.7L758.8 561.2L759.9 559.8L761.0 557.5L762.1 560.7L763.2 560.5L764.3 560.3L765.4 560.4L766.5 558.7L767.6 559.3L768.7 560.9L769.8 561.1L770.9 560.0L772.0 560.7L773.1 559.1L774.2 560.0L775.3 560.5L776.4 560.9L777.5 559.3L778.6 557.5L779.7 560.3L780.8 560.7L781.9 561.2L783.0 561.0L784.1 558.4L785.2 560.6L786.3 560.3L787.4 560.2L788.5 560.1L789.6 559.1L790.7 560.7L791.8 560.8L792.9 559.8L794.0 559.1L795.1 561.2L796.2 560.3L797.3 560.6L798.4 559.7L799.5 561.0L800.6 560.8L801.7 560.3L802.8 561.4L803.9 561.3L805.0 561.3L806.1 559.6L807.2 561.2L808.3 559.3L809.4 560.9L810.5 559.5L811.6 559.7L812.7 559.7L813.8 560.7L814.9 559.4L816.0 560.1L817.1 559.8L818.2 559.4L819.3 561.3L820.4 559.9L821.5 558.4L822.6 559.2L823.7 561.3L824.8 560.5L825.9 560.6L827.0 559.0L828.1 559.7L829.2 561.5L830.3 559.7L831.4 561.3L832.5 561.5L833.6 560.3L834.7 560.8L835.8 559.4L836.9 560.6L838.0 559.6L839.1 560.6L840.2 560.2L841.3 561.2L842.4 561.3L843.5 560.9L844.6 557.8L845.7 558.0L846.8 561.2L847.9 560.9L849.0 560.3L850.1 560.9L851.2 561.4L852.3 560.8L853.4 561.1L854.5 559.0L855.6 559.3L856.7 560.5L857.8 560.6L858.9 560.2L860.0 560.0L861.1 559.2L862.2 559.0L863.3 559.4L864.4 559.3L865.5 561.3L866.6 560.7L867.7 560.8L868.8 561.6L869.9 556.6L871.0 559.5L872.1 559.7L873.2 559.5L874.3 559.6L875.4 561.3L876.5 560.6L877.6 560.9L878.7 561.5L879.8 561.0L880.9 560.6L882.0 559.5L883.1 559.9L884.2 560.9L885.3 560.8L886.4 560.7L887.5 561.1L888.6 560.2L889.7 561.1L890.8 561.2L891.9 558.0L893.0 560.6L894.1 560.2L895.2 561.1L896.3 560.8L897.4 561.3L898.5 560.5L899.6 561.0L900.7 559.8L901.8 560.9L902.9 559.1L904.0 561.1L905.1 559.0L906.2 559.9L907.3 559.9L908.4 560.0L909.5 559.4L910.6 560.3L911.7 561.3L912.8 559.8L913.9 559.9L915.0 560.6L916.1 560.0L917.2 557.5L918.3 560.4L919.4 560.1L920.5 561.2L921.6 559.0L922.7 560.8L923.8 559.0L924.9 559.3L926.0 559.0L927.1 561.0L928.2 559.9L929.3 559.4L930.4 560.3L931.5 561.4L932.6 559.7L933.7 559.5L934.8 560.2L935.9 561.1L937.0 559.9L938.1 560.2L939.2 560.3L940.3 559.5L941.4 559.6L942.5 559.2L943.6 561.2L944.7 559.1L945.8 559.4L946.9 561.3L948.0 560.6L949.1 560.0L950.2 561.4L951.3 561.1L952.4 559.3L953.5 561.1L954.6 558.3L955.7 560.8L956.8 560.9L957.9 559.8L959.0 561.3L960.1 560.4L961.2 561.3L962.3 560.0L963.4 561.1L964.5 559.8L965.6 560.7L966.7 560.5L967.8 560.0L968.9 559.5L970.0 560.4L971.1 559.2L971.3 565.1999999999999Z"/></clipPath>
<g clip-path="url(#wf)"><rect x="29.5" y="550" width="941.8" height="16" fill="#4482c3"/>
<rect x="93.8" y="550" width="57.2" height="16" fill="#5a8ec6"/>
<rect x="208" y="550" width="69" height="16" fill="#c19a68"/>
<rect x="408.2" y="550" width="187.09999999999997" height="16" fill="#5a8ec6"/>
<rect x="631" y="550" width="26.5" height="16" fill="#5a8ec6"/>
<rect x="777.3" y="550" width="69.10000000000002" height="16" fill="#5a8ec6"/>
<rect x="939.7" y="550" width="31.59999999999991" height="16" fill="#5a8ec6"/>
</g>
<rect x="20.8" y="535.800" width="1.100" height="10.800" fill="#fbe0b4"/>
<rect x="23.8" y="535.800" width="1.100" height="10.800" fill="#fbe0b4"/>
<rect x="974.7" y="535.800" width="1.100" height="10.800" fill="#fbe0b4"/>
<rect x="977.8" y="535.800" width="1.100" height="10.800" fill="#fbe0b4"/>
<path d="M89.2 506 L98.39999999999999 506 L93.8 512.800Z" fill="#555"/><rect x="80.0" y="479.100" width="27.600" height="27.600" rx="3" fill="#555"/><svg x="73.70" y="472.80" width="40.2" height="40.2" viewBox="0 0 64 64"><use href="#e-heart"/></svg>
<path d="M203.6 506 L212.79999999999998 506 L208.2 512.800Z" fill="#555"/><rect x="193.7" y="478.400" width="29" height="29" rx="3.500" fill="#f0a23c"/><rect x="195.2" y="479.900" width="26" height="26" rx="2.200" fill="#555"/><svg x="188.10" y="472.80" width="40.2" height="40.2" viewBox="0 0 64 64"><use href="#e-up"/></svg>
<path d="M403.59999999999997 506 L412.8 506 L408.2 512.800Z" fill="#555"/><rect x="394.4" y="479.100" width="27.600" height="27.600" rx="3" fill="#555"/><svg x="388.10" y="472.80" width="40.2" height="40.2" viewBox="0 0 64 64"><use href="#e-music"/></svg>
<path d="M626.4 506 L635.6 506 L631 512.800Z" fill="#555"/><rect x="617.2" y="479.100" width="27.600" height="27.600" rx="3" fill="#555"/><svg x="610.90" y="472.80" width="40.2" height="40.2" viewBox="0 0 64 64"><use href="#e-dizzy"/></svg>
<path d="M772.9 506 L782.1 506 L777.5 512.800Z" fill="#555"/><rect x="763.7" y="479.100" width="27.600" height="27.600" rx="3" fill="#555"/><svg x="757.40" y="472.80" width="40.2" height="40.2" viewBox="0 0 64 64"><use href="#e-up"/></svg>
<path d="M935.1 506 L944.3000000000001 506 L939.7 512.800Z" fill="#555"/><rect x="925.9000000000001" y="479.100" width="27.600" height="27.600" rx="3" fill="#555"/><svg x="919.60" y="472.80" width="40.2" height="40.2" viewBox="0 0 64 64"><use href="#e-lookup"/></svg>
<rect x="970" y="466" width="1.600" height="114" fill="#2b72b4"/>
<path d="M966.100 459.800 Q966.100 459 966.900 459 L974.300 459 Q975.100 459 975.100 459.800 L975.100 464.500 L970.800 469.200 L966.100 464.500Z" fill="#2f8ee6"/>
<rect x="970.300" y="463" width="1" height="5" fill="#1c4f86"/>
<g fill="#a8a8a8"><rect x="20.800" y="575.900" width="5.200" height="1.800" rx=".6"/><rect x="17.300" y="577.800" width="12.200" height="1.600" rx=".5"/><rect x="18.600" y="579.700" width="9.600" height="2"/></g>
</svg></div>
<!-- ===== text overlay ===== -->
<span class="t" id="wtitle" style="left:18.60px;top:3.90px;font-size:9.7px;color:#1b1b1b;transform:scaleX(0.9775);transform-origin:0 0;">Adobe Character Animator 2025</span>
<span class="t" id="m1" style="left:0.06px;top:22.50px;font-size:10.3px;color:#1a1a1a;transform:scaleX(0.7212);transform-origin:0 0;">ファイル(F)</span>
<span class="t" id="m2" style="left:50.00px;top:23.00px;font-size:10.3px;color:#1a1a1a;transform:scaleX(0.8529);transform-origin:0 0;">編集(E)</span>
<span class="t" id="m3" style="left:90.28px;top:22.50px;font-size:10.3px;color:#1a1a1a;transform:scaleX(0.7209);transform-origin:0 0;">シーン(S)</span>
<span class="t" id="m4" style="left:132.26px;top:23.00px;font-size:10.3px;color:#1a1a1a;transform:scaleX(0.7358);transform-origin:0 0;">パペット(P)</span>
<span class="t" id="m5" style="left:183.29px;top:22.50px;font-size:10.3px;color:#1a1a1a;transform:scaleX(0.7123);transform-origin:0 0;">タイムライン(T)</span>
<span class="t" id="m6" style="left:246.78px;top:22.50px;font-size:10.3px;color:#1a1a1a;transform:scaleX(0.7239);transform-origin:0 0;">ウィンドウ(W)</span>
<span class="t" id="m7" style="left:306.19px;top:23.00px;font-size:10.3px;color:#1a1a1a;transform:scaleX(0.8068);transform-origin:0 0;">ヘルプ(H)</span>
<span class="t" id="m8" style="left:353.27px;top:23.50px;font-size:10.3px;color:#1a1a1a;transform:scaleX(0.7329);transform-origin:0 0;">バージョン 25.0</span>
<span class="t" id="run" style="left:42.90px;top:49.10px;font-size:10.4px;color:#e6e6e6;transform:scaleX(1.1000);transform-origin:0 0;font-weight:500;">実行</span>
<span class="t" id="ptitle" style="left:410.81px;top:47.80px;font-size:10.5px;color:#7e7e7e;transform:scaleX(0.7945);transform-origin:0 0;">レッドモンスターのスターター プロジェクト 4</span>
<span class="t" id="wsname" style="left:816.85px;top:47.70px;font-size:10.5px;color:#a2a2a2;transform:scaleX(0.7451);transform-origin:0 0;">スターター</span>
<span class="t" id="tc1" style="left:9.00px;top:420.00px;font-size:13.2px;color:#ececec;transform:scaleX(0.9455);transform-origin:0 0;-webkit-text-stroke:.22px currentColor;">00:16</span>
<span class="t" id="tc1f" style="left:41.31px;top:424.00px;font-size:9.3px;color:#dcdcdc;transform:scaleX(1.2857);transform-origin:0 0;font-family:'Liberation Serif','Noto Serif CJK SC',serif;">11</span>
<span class="t" id="tc2" style="left:59.40px;top:420.00px;font-size:13.2px;color:#9a9a9a;transform:scaleX(0.9273);transform-origin:0 0;">00:16</span>
<span class="t" id="tc2f" style="left:91.20px;top:424.00px;font-size:9.3px;color:#8e8e8e;transform:scaleX(1.2000);transform-origin:0 0;font-family:'Liberation Serif','Noto Serif CJK SC',serif;">12</span>
<span class="t" id="hint" style="left:748.19px;top:399.30px;font-size:10.5px;color:#929292;transform:scaleX(0.7708);transform-origin:0 0;">トリガーをタイムラインにドラッグ &amp; ドロップ</span>
</body>
</html>
